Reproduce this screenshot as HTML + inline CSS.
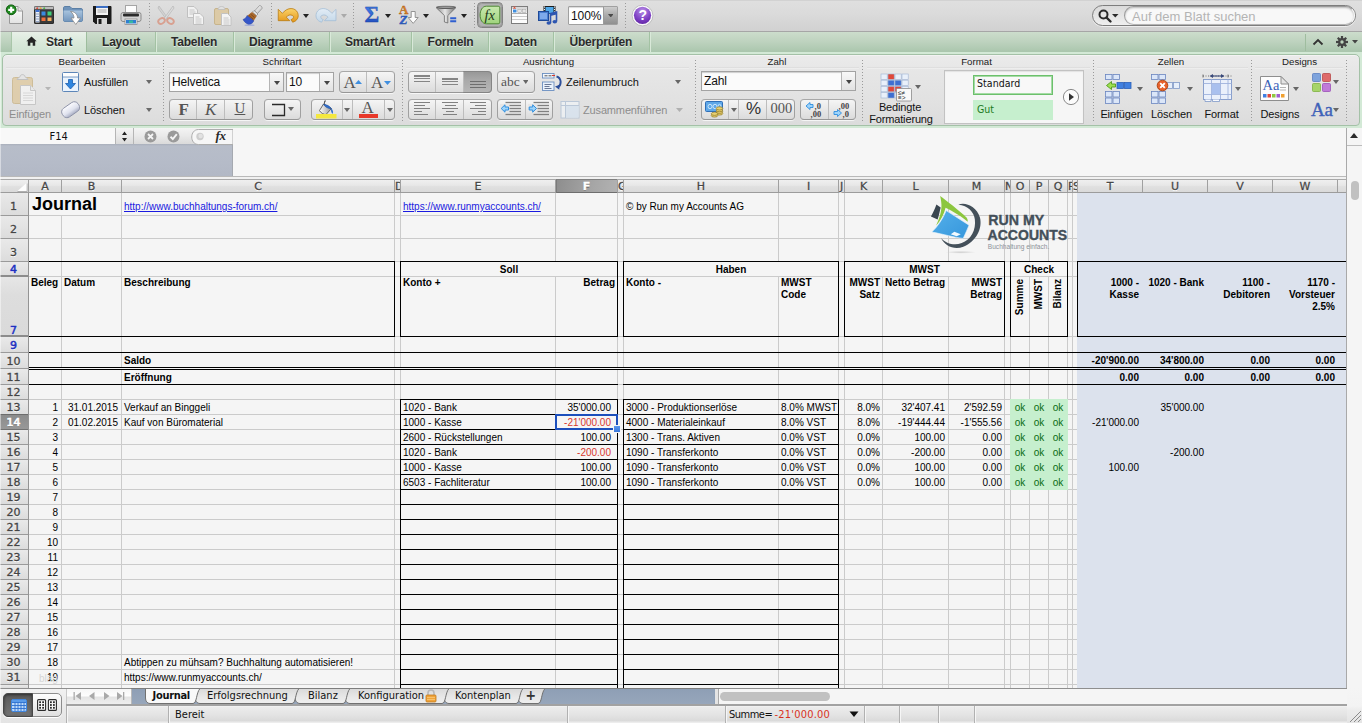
<!DOCTYPE html>
<html lang="de"><head><meta charset="utf-8"><title>Journal</title>
<style>
*{box-sizing:border-box;margin:0;padding:0}
html,body{width:1362px;height:723px;overflow:hidden;background:#e4e4e4}
body{position:relative;font-family:"Liberation Sans",sans-serif;font-size:10px;color:#000}
.abs,.l,.c,.hc,.rh,.u,svg.abs{position:absolute}
.l{display:block;background:#000}
.c{font:10px/12px "Liberation Sans",sans-serif;white-space:nowrap;color:#000}
.b{font-weight:bold}
.w{white-space:normal}
.red{color:#d8382e}
.grn{color:#0a6b12}
.lnk{color:#1a1ae0}
.rot{transform:rotate(-90deg);transform-origin:0 0;width:60px;text-align:right;height:12px}
.colhdr{background:linear-gradient(#efefef,#e7e7e7 45%,#e0e0e0 55%,#dadada);border-top:1px solid #a9a9a9;border-bottom:1px solid #9c9c9c}
.selh{background:linear-gradient(100deg,#8e8e8e,#a6a6a6 60%,#b2b2b2);border-top:1px solid #808080;border-bottom:1px solid #6e6e6e;border-left:1px solid #7a7a7a}
.hc{-webkit-text-stroke:.3px #555;font:11px/13px "DejaVu Sans","Liberation Sans",sans-serif;color:#3a3a3a;text-align:center;height:13px;overflow:hidden;white-space:nowrap;text-shadow:0 1px 0 #fff}
.hc.sel{-webkit-text-stroke:.3px #fff;color:#fff;font-weight:bold;text-shadow:0 1px 0 #555}
.rowhdr{background:linear-gradient(90deg,#e9e9e9,#dcdcdc)}
.selr{background:linear-gradient(#8c8c8c,#989898);border-top:1px solid #6c6c6c;border-bottom:1px solid #727272}
.rh{-webkit-text-stroke:.3px;left:0;width:27px;height:15px;font:11px/15px "DejaVu Sans","Liberation Sans",sans-serif;color:#444;text-align:center;text-shadow:0 1px 0 #fff}
.rh.blue{color:#2030c0;-webkit-text-stroke:.5px #2030c0}
.rh.sel{color:#fff;-webkit-text-stroke:.7px #fff;text-shadow:0 1px 0 #555}
.u{font-family:"DejaVu Sans","Liberation Sans",sans-serif;white-space:nowrap;color:#111}
</style></head>
<body>
<div class="abs" style="left:0;top:177px;width:1362px;height:511px;background:#f5f5f5"></div>
<i class="l" style="left:61px;top:193px;width:1px;height:495px;background:#cbcbcb"></i>
<i class="l" style="left:121px;top:193px;width:1px;height:495px;background:#cbcbcb"></i>
<i class="l" style="left:394px;top:193px;width:1px;height:495px;background:#cbcbcb"></i>
<i class="l" style="left:400px;top:193px;width:1px;height:495px;background:#cbcbcb"></i>
<i class="l" style="left:555px;top:193px;width:1px;height:495px;background:#cbcbcb"></i>
<i class="l" style="left:617px;top:193px;width:1px;height:495px;background:#cbcbcb"></i>
<i class="l" style="left:623px;top:193px;width:1px;height:495px;background:#cbcbcb"></i>
<i class="l" style="left:778px;top:193px;width:1px;height:495px;background:#cbcbcb"></i>
<i class="l" style="left:838px;top:193px;width:1px;height:495px;background:#cbcbcb"></i>
<i class="l" style="left:844px;top:193px;width:1px;height:495px;background:#cbcbcb"></i>
<i class="l" style="left:882px;top:193px;width:1px;height:495px;background:#cbcbcb"></i>
<i class="l" style="left:948px;top:193px;width:1px;height:495px;background:#cbcbcb"></i>
<i class="l" style="left:1004px;top:193px;width:1px;height:495px;background:#cbcbcb"></i>
<i class="l" style="left:1010px;top:193px;width:1px;height:495px;background:#cbcbcb"></i>
<i class="l" style="left:1029px;top:193px;width:1px;height:495px;background:#cbcbcb"></i>
<i class="l" style="left:1048px;top:193px;width:1px;height:495px;background:#cbcbcb"></i>
<i class="l" style="left:1067px;top:193px;width:1px;height:495px;background:#cbcbcb"></i>
<i class="l" style="left:1072px;top:193px;width:1px;height:495px;background:#cbcbcb"></i>
<i class="l" style="left:1077px;top:193px;width:1px;height:495px;background:#cbcbcb"></i>
<i class="l" style="left:1142px;top:193px;width:1px;height:495px;background:#cbcbcb"></i>
<i class="l" style="left:1207px;top:193px;width:1px;height:495px;background:#cbcbcb"></i>
<i class="l" style="left:1272px;top:193px;width:1px;height:495px;background:#cbcbcb"></i>
<i class="l" style="left:1337px;top:193px;width:1px;height:495px;background:#cbcbcb"></i>
<i class="l" style="left:29px;top:215px;width:1318px;height:1px;background:#cbcbcb"></i>
<i class="l" style="left:29px;top:238px;width:1318px;height:1px;background:#cbcbcb"></i>
<i class="l" style="left:29px;top:261px;width:1318px;height:1px;background:#cbcbcb"></i>
<i class="l" style="left:29px;top:276px;width:1318px;height:1px;background:#cbcbcb"></i>
<i class="l" style="left:29px;top:336px;width:1318px;height:1px;background:#cbcbcb"></i>
<i class="l" style="left:29px;top:352px;width:1318px;height:1px;background:#cbcbcb"></i>
<i class="l" style="left:29px;top:368px;width:1318px;height:1px;background:#cbcbcb"></i>
<i class="l" style="left:29px;top:384px;width:1318px;height:1px;background:#cbcbcb"></i>
<i class="l" style="left:29px;top:399px;width:1318px;height:1px;background:#cbcbcb"></i>
<i class="l" style="left:29px;top:414px;width:1318px;height:1px;background:#cbcbcb"></i>
<i class="l" style="left:29px;top:429px;width:1318px;height:1px;background:#cbcbcb"></i>
<i class="l" style="left:29px;top:444px;width:1318px;height:1px;background:#cbcbcb"></i>
<i class="l" style="left:29px;top:459px;width:1318px;height:1px;background:#cbcbcb"></i>
<i class="l" style="left:29px;top:474px;width:1318px;height:1px;background:#cbcbcb"></i>
<i class="l" style="left:29px;top:489px;width:1318px;height:1px;background:#cbcbcb"></i>
<i class="l" style="left:29px;top:504px;width:1318px;height:1px;background:#cbcbcb"></i>
<i class="l" style="left:29px;top:519px;width:1318px;height:1px;background:#cbcbcb"></i>
<i class="l" style="left:29px;top:534px;width:1318px;height:1px;background:#cbcbcb"></i>
<i class="l" style="left:29px;top:549px;width:1318px;height:1px;background:#cbcbcb"></i>
<i class="l" style="left:29px;top:564px;width:1318px;height:1px;background:#cbcbcb"></i>
<i class="l" style="left:29px;top:579px;width:1318px;height:1px;background:#cbcbcb"></i>
<i class="l" style="left:29px;top:594px;width:1318px;height:1px;background:#cbcbcb"></i>
<i class="l" style="left:29px;top:609px;width:1318px;height:1px;background:#cbcbcb"></i>
<i class="l" style="left:29px;top:624px;width:1318px;height:1px;background:#cbcbcb"></i>
<i class="l" style="left:29px;top:639px;width:1318px;height:1px;background:#cbcbcb"></i>
<i class="l" style="left:29px;top:654px;width:1318px;height:1px;background:#cbcbcb"></i>
<i class="l" style="left:29px;top:669px;width:1318px;height:1px;background:#cbcbcb"></i>
<i class="l" style="left:29px;top:684px;width:1318px;height:1px;background:#cbcbcb"></i>
<div class="abs" style="left:555px;top:262px;width:1px;height:14px;background:#f5f5f5"></div>
<div class="abs" style="left:778px;top:262px;width:1px;height:14px;background:#f5f5f5"></div>
<div class="abs" style="left:882px;top:262px;width:1px;height:14px;background:#f5f5f5"></div>
<div class="abs" style="left:948px;top:262px;width:1px;height:14px;background:#f5f5f5"></div>
<div class="abs" style="left:1029px;top:262px;width:1px;height:14px;background:#f5f5f5"></div>
<div class="abs" style="left:1048px;top:262px;width:1px;height:14px;background:#f5f5f5"></div>
<div class="abs" style="left:61px;top:193px;width:1px;height:22px;background:#f5f5f5"></div>
<div class="abs" style="left:1077px;top:193px;width:269px;height:495px;background:#dce2ed"></div>
<div class="abs" style="left:1010px;top:399px;width:58px;height:91px;background:#c6efce"></div>
<div class="abs colhdr" style="left:0;top:179px;width:1347px;height:14px"></div>
<i class="l" style="left:28px;top:180px;width:1px;height:12px;background:#a0a0a0"></i>
<i class="l" style="left:61px;top:180px;width:1px;height:12px;background:#a0a0a0"></i>
<i class="l" style="left:121px;top:180px;width:1px;height:12px;background:#a0a0a0"></i>
<i class="l" style="left:394px;top:180px;width:1px;height:12px;background:#a0a0a0"></i>
<i class="l" style="left:400px;top:180px;width:1px;height:12px;background:#a0a0a0"></i>
<i class="l" style="left:555px;top:180px;width:1px;height:12px;background:#a0a0a0"></i>
<i class="l" style="left:617px;top:180px;width:1px;height:12px;background:#a0a0a0"></i>
<i class="l" style="left:623px;top:180px;width:1px;height:12px;background:#a0a0a0"></i>
<i class="l" style="left:778px;top:180px;width:1px;height:12px;background:#a0a0a0"></i>
<i class="l" style="left:838px;top:180px;width:1px;height:12px;background:#a0a0a0"></i>
<i class="l" style="left:844px;top:180px;width:1px;height:12px;background:#a0a0a0"></i>
<i class="l" style="left:882px;top:180px;width:1px;height:12px;background:#a0a0a0"></i>
<i class="l" style="left:948px;top:180px;width:1px;height:12px;background:#a0a0a0"></i>
<i class="l" style="left:1004px;top:180px;width:1px;height:12px;background:#a0a0a0"></i>
<i class="l" style="left:1010px;top:180px;width:1px;height:12px;background:#a0a0a0"></i>
<i class="l" style="left:1029px;top:180px;width:1px;height:12px;background:#a0a0a0"></i>
<i class="l" style="left:1048px;top:180px;width:1px;height:12px;background:#a0a0a0"></i>
<i class="l" style="left:1067px;top:180px;width:1px;height:12px;background:#a0a0a0"></i>
<i class="l" style="left:1072px;top:180px;width:1px;height:12px;background:#a0a0a0"></i>
<i class="l" style="left:1077px;top:180px;width:1px;height:12px;background:#a0a0a0"></i>
<i class="l" style="left:1142px;top:180px;width:1px;height:12px;background:#a0a0a0"></i>
<i class="l" style="left:1207px;top:180px;width:1px;height:12px;background:#a0a0a0"></i>
<i class="l" style="left:1272px;top:180px;width:1px;height:12px;background:#a0a0a0"></i>
<i class="l" style="left:1337px;top:180px;width:1px;height:12px;background:#a0a0a0"></i>
<div class="abs selh" style="left:556px;top:179px;width:61px;height:14px;"></div>
<div class="hc" style="left:29px;top:180px;width:32px">A</div>
<div class="hc" style="left:62px;top:180px;width:59px">B</div>
<div class="hc" style="left:122px;top:180px;width:272px">C</div>
<div class="hc" style="left:395px;top:180px;width:5px">D</div>
<div class="hc" style="left:401px;top:180px;width:154px">E</div>
<div class="hc sel" style="left:556px;top:180px;width:61px">F</div>
<div class="hc" style="left:618px;top:180px;width:5px">G</div>
<div class="hc" style="left:624px;top:180px;width:154px">H</div>
<div class="hc" style="left:779px;top:180px;width:59px">I</div>
<div class="hc" style="left:839px;top:180px;width:5px">J</div>
<div class="hc" style="left:845px;top:180px;width:37px">K</div>
<div class="hc" style="left:883px;top:180px;width:65px">L</div>
<div class="hc" style="left:949px;top:180px;width:55px">M</div>
<div class="hc" style="left:1005px;top:180px;width:5px">N</div>
<div class="hc" style="left:1011px;top:180px;width:18px">O</div>
<div class="hc" style="left:1030px;top:180px;width:18px">P</div>
<div class="hc" style="left:1049px;top:180px;width:18px">Q</div>
<div class="hc" style="left:1068px;top:180px;width:4px">R</div>
<div class="hc" style="left:1073px;top:180px;width:4px">S</div>
<div class="hc" style="left:1078px;top:180px;width:64px">T</div>
<div class="hc" style="left:1143px;top:180px;width:64px">U</div>
<div class="hc" style="left:1208px;top:180px;width:64px">V</div>
<div class="hc" style="left:1273px;top:180px;width:64px">W</div>
<div class="hc" style="left:1338px;top:180px;width:9px"></div>
<svg class="abs" style="left:16px;top:182px" width="12" height="10"><path d="M11 1.500V9.500H1.500" fill="none" stroke="#b0b0b0" stroke-width="1"/><path d="M10.500 1L10.500 9L1.500 9Z" fill="#fdfdfd"/></svg>
<div class="abs rowhdr" style="left:0;top:193px;width:28px;height:495px"></div>
<i class="l" style="left:28px;top:193px;width:1px;height:495px;background:#939393"></i>
<div class="abs" style="left:0px;top:193px;width:28px;height:22px;background:linear-gradient(#e9e9e9,#e3e3e3 50%,#dcdcdc)"></div>
<i class="l" style="left:0px;top:215px;width:28px;height:1px;background:#9a9a9a"></i>
<div class="rh" style="top:199px">1</div>
<div class="abs" style="left:0px;top:216px;width:28px;height:22px;background:linear-gradient(#e9e9e9,#e3e3e3 50%,#dcdcdc)"></div>
<i class="l" style="left:0px;top:238px;width:28px;height:1px;background:#9a9a9a"></i>
<div class="rh" style="top:222px">2</div>
<div class="abs" style="left:0px;top:239px;width:28px;height:22px;background:linear-gradient(#e9e9e9,#e3e3e3 50%,#dcdcdc)"></div>
<i class="l" style="left:0px;top:261px;width:28px;height:1px;background:#9a9a9a"></i>
<div class="rh" style="top:245px">3</div>
<div class="abs" style="left:0px;top:262px;width:28px;height:14px;background:linear-gradient(#e9e9e9,#e3e3e3 50%,#dcdcdc)"></div>
<i class="l" style="left:0px;top:275px;width:28px;height:2px;background:#8c8c8c"></i>
<div class="rh blue" style="top:262px">4</div>
<div class="abs" style="left:0px;top:277px;width:28px;height:59px;background:linear-gradient(#e6e6e6,#dddddd 30%,#dadada)"></div>
<i class="l" style="left:0px;top:335px;width:28px;height:2px;background:#8c8c8c"></i>
<div class="rh blue" style="top:322.5px">7</div>
<div class="abs" style="left:0px;top:337px;width:28px;height:15px;background:linear-gradient(#e9e9e9,#e3e3e3 50%,#dcdcdc)"></div>
<i class="l" style="left:0px;top:352px;width:28px;height:1px;background:#9a9a9a"></i>
<div class="rh blue" style="top:338px">9</div>
<div class="abs" style="left:0px;top:353px;width:28px;height:15px;background:linear-gradient(#e9e9e9,#e3e3e3 50%,#dcdcdc)"></div>
<i class="l" style="left:0px;top:368px;width:28px;height:1px;background:#9a9a9a"></i>
<div class="rh" style="top:354px">10</div>
<div class="abs" style="left:0px;top:369px;width:28px;height:15px;background:linear-gradient(#e9e9e9,#e3e3e3 50%,#dcdcdc)"></div>
<i class="l" style="left:0px;top:384px;width:28px;height:1px;background:#9a9a9a"></i>
<div class="rh" style="top:370px">11</div>
<div class="abs" style="left:0px;top:385px;width:28px;height:14px;background:linear-gradient(#e9e9e9,#e3e3e3 50%,#dcdcdc)"></div>
<i class="l" style="left:0px;top:399px;width:28px;height:1px;background:#9a9a9a"></i>
<div class="rh" style="top:385px">12</div>
<div class="abs" style="left:0px;top:400px;width:28px;height:14px;background:linear-gradient(#e9e9e9,#e3e3e3 50%,#dcdcdc)"></div>
<i class="l" style="left:0px;top:414px;width:28px;height:1px;background:#9a9a9a"></i>
<div class="rh" style="top:400px">13</div>
<div class="abs selr" style="left:0px;top:414px;width:28px;height:16px;"></div>
<i class="l" style="left:0px;top:429px;width:28px;height:1px;background:#727272"></i>
<div class="rh sel" style="top:415px">14</div>
<div class="abs" style="left:0px;top:430px;width:28px;height:14px;background:linear-gradient(#e9e9e9,#e3e3e3 50%,#dcdcdc)"></div>
<i class="l" style="left:0px;top:444px;width:28px;height:1px;background:#9a9a9a"></i>
<div class="rh" style="top:430px">15</div>
<div class="abs" style="left:0px;top:445px;width:28px;height:14px;background:linear-gradient(#e9e9e9,#e3e3e3 50%,#dcdcdc)"></div>
<i class="l" style="left:0px;top:459px;width:28px;height:1px;background:#9a9a9a"></i>
<div class="rh" style="top:445px">16</div>
<div class="abs" style="left:0px;top:460px;width:28px;height:14px;background:linear-gradient(#e9e9e9,#e3e3e3 50%,#dcdcdc)"></div>
<i class="l" style="left:0px;top:474px;width:28px;height:1px;background:#9a9a9a"></i>
<div class="rh" style="top:460px">17</div>
<div class="abs" style="left:0px;top:475px;width:28px;height:14px;background:linear-gradient(#e9e9e9,#e3e3e3 50%,#dcdcdc)"></div>
<i class="l" style="left:0px;top:489px;width:28px;height:1px;background:#9a9a9a"></i>
<div class="rh" style="top:475px">18</div>
<div class="abs" style="left:0px;top:490px;width:28px;height:14px;background:linear-gradient(#e9e9e9,#e3e3e3 50%,#dcdcdc)"></div>
<i class="l" style="left:0px;top:504px;width:28px;height:1px;background:#9a9a9a"></i>
<div class="rh" style="top:490px">19</div>
<div class="abs" style="left:0px;top:505px;width:28px;height:14px;background:linear-gradient(#e9e9e9,#e3e3e3 50%,#dcdcdc)"></div>
<i class="l" style="left:0px;top:519px;width:28px;height:1px;background:#9a9a9a"></i>
<div class="rh" style="top:505px">20</div>
<div class="abs" style="left:0px;top:520px;width:28px;height:14px;background:linear-gradient(#e9e9e9,#e3e3e3 50%,#dcdcdc)"></div>
<i class="l" style="left:0px;top:534px;width:28px;height:1px;background:#9a9a9a"></i>
<div class="rh" style="top:520px">21</div>
<div class="abs" style="left:0px;top:535px;width:28px;height:14px;background:linear-gradient(#e9e9e9,#e3e3e3 50%,#dcdcdc)"></div>
<i class="l" style="left:0px;top:549px;width:28px;height:1px;background:#9a9a9a"></i>
<div class="rh" style="top:535px">22</div>
<div class="abs" style="left:0px;top:550px;width:28px;height:14px;background:linear-gradient(#e9e9e9,#e3e3e3 50%,#dcdcdc)"></div>
<i class="l" style="left:0px;top:564px;width:28px;height:1px;background:#9a9a9a"></i>
<div class="rh" style="top:550px">23</div>
<div class="abs" style="left:0px;top:565px;width:28px;height:14px;background:linear-gradient(#e9e9e9,#e3e3e3 50%,#dcdcdc)"></div>
<i class="l" style="left:0px;top:579px;width:28px;height:1px;background:#9a9a9a"></i>
<div class="rh" style="top:565px">24</div>
<div class="abs" style="left:0px;top:580px;width:28px;height:14px;background:linear-gradient(#e9e9e9,#e3e3e3 50%,#dcdcdc)"></div>
<i class="l" style="left:0px;top:594px;width:28px;height:1px;background:#9a9a9a"></i>
<div class="rh" style="top:580px">25</div>
<div class="abs" style="left:0px;top:595px;width:28px;height:14px;background:linear-gradient(#e9e9e9,#e3e3e3 50%,#dcdcdc)"></div>
<i class="l" style="left:0px;top:609px;width:28px;height:1px;background:#9a9a9a"></i>
<div class="rh" style="top:595px">26</div>
<div class="abs" style="left:0px;top:610px;width:28px;height:14px;background:linear-gradient(#e9e9e9,#e3e3e3 50%,#dcdcdc)"></div>
<i class="l" style="left:0px;top:624px;width:28px;height:1px;background:#9a9a9a"></i>
<div class="rh" style="top:610px">27</div>
<div class="abs" style="left:0px;top:625px;width:28px;height:14px;background:linear-gradient(#e9e9e9,#e3e3e3 50%,#dcdcdc)"></div>
<i class="l" style="left:0px;top:639px;width:28px;height:1px;background:#9a9a9a"></i>
<div class="rh" style="top:625px">28</div>
<div class="abs" style="left:0px;top:640px;width:28px;height:14px;background:linear-gradient(#e9e9e9,#e3e3e3 50%,#dcdcdc)"></div>
<i class="l" style="left:0px;top:654px;width:28px;height:1px;background:#9a9a9a"></i>
<div class="rh" style="top:640px">29</div>
<div class="abs" style="left:0px;top:655px;width:28px;height:14px;background:linear-gradient(#e9e9e9,#e3e3e3 50%,#dcdcdc)"></div>
<i class="l" style="left:0px;top:669px;width:28px;height:1px;background:#9a9a9a"></i>
<div class="rh" style="top:655px">30</div>
<div class="abs" style="left:0px;top:670px;width:28px;height:14px;background:linear-gradient(#e9e9e9,#e3e3e3 50%,#dcdcdc)"></div>
<i class="l" style="left:0px;top:684px;width:28px;height:1px;background:#9a9a9a"></i>
<div class="rh" style="top:670px">31</div>
<div class="abs" style="left:0px;top:685px;width:28px;height:3px;background:linear-gradient(#e9e9e9,#e3e3e3 50%,#dcdcdc)"></div>
<i class="l" style="left:29px;top:261px;width:366px;height:1px"></i>
<i class="l" style="left:29px;top:336px;width:366px;height:1px"></i>
<i class="l" style="left:394px;top:261px;width:1px;height:76px"></i>
<i class="l" style="left:400px;top:261px;width:218px;height:1px"></i>
<i class="l" style="left:400px;top:336px;width:218px;height:1px"></i>
<i class="l" style="left:400px;top:261px;width:1px;height:76px"></i>
<i class="l" style="left:617px;top:261px;width:1px;height:76px"></i>
<i class="l" style="left:623px;top:261px;width:216px;height:1px"></i>
<i class="l" style="left:623px;top:336px;width:216px;height:1px"></i>
<i class="l" style="left:623px;top:261px;width:1px;height:76px"></i>
<i class="l" style="left:838px;top:261px;width:1px;height:76px"></i>
<i class="l" style="left:844px;top:261px;width:161px;height:1px"></i>
<i class="l" style="left:844px;top:336px;width:161px;height:1px"></i>
<i class="l" style="left:844px;top:261px;width:1px;height:76px"></i>
<i class="l" style="left:1004px;top:261px;width:1px;height:76px"></i>
<i class="l" style="left:1010px;top:261px;width:58px;height:1px"></i>
<i class="l" style="left:1010px;top:336px;width:58px;height:1px"></i>
<i class="l" style="left:1010px;top:261px;width:1px;height:76px"></i>
<i class="l" style="left:1067px;top:261px;width:1px;height:76px"></i>
<i class="l" style="left:1077px;top:261px;width:270px;height:1px"></i>
<i class="l" style="left:1077px;top:336px;width:270px;height:1px"></i>
<i class="l" style="left:1077px;top:261px;width:1px;height:76px"></i>
<i class="l" style="left:29px;top:352px;width:1318px;height:1px"></i>
<i class="l" style="left:29px;top:367px;width:1318px;height:1px"></i>
<i class="l" style="left:29px;top:369px;width:1318px;height:1px"></i>
<div class="abs" style="left:29px;top:368px;width:1318px;height:1px;background:#f5f5f5"></div>
<div class="abs" style="left:1077px;top:368px;width:269px;height:1px;background:#dce2ed"></div>
<i class="l" style="left:29px;top:384px;width:589px;height:1px"></i>
<i class="l" style="left:623px;top:384px;width:724px;height:1px"></i>
<i class="l" style="left:400px;top:399px;width:1px;height:289px"></i>
<i class="l" style="left:617px;top:399px;width:1px;height:289px"></i>
<i class="l" style="left:400px;top:399px;width:218px;height:1px"></i>
<i class="l" style="left:400px;top:414px;width:218px;height:1px"></i>
<i class="l" style="left:400px;top:429px;width:218px;height:1px"></i>
<i class="l" style="left:400px;top:444px;width:218px;height:1px"></i>
<i class="l" style="left:400px;top:459px;width:218px;height:1px"></i>
<i class="l" style="left:400px;top:474px;width:218px;height:1px"></i>
<i class="l" style="left:400px;top:489px;width:218px;height:1px"></i>
<i class="l" style="left:400px;top:504px;width:218px;height:1px"></i>
<i class="l" style="left:400px;top:519px;width:218px;height:1px"></i>
<i class="l" style="left:400px;top:534px;width:218px;height:1px"></i>
<i class="l" style="left:400px;top:549px;width:218px;height:1px"></i>
<i class="l" style="left:400px;top:564px;width:218px;height:1px"></i>
<i class="l" style="left:400px;top:579px;width:218px;height:1px"></i>
<i class="l" style="left:400px;top:594px;width:218px;height:1px"></i>
<i class="l" style="left:400px;top:609px;width:218px;height:1px"></i>
<i class="l" style="left:400px;top:624px;width:218px;height:1px"></i>
<i class="l" style="left:400px;top:639px;width:218px;height:1px"></i>
<i class="l" style="left:400px;top:654px;width:218px;height:1px"></i>
<i class="l" style="left:400px;top:669px;width:218px;height:1px"></i>
<i class="l" style="left:400px;top:684px;width:218px;height:1px"></i>
<i class="l" style="left:623px;top:399px;width:1px;height:289px"></i>
<i class="l" style="left:838px;top:399px;width:1px;height:289px"></i>
<i class="l" style="left:623px;top:399px;width:216px;height:1px"></i>
<i class="l" style="left:623px;top:414px;width:216px;height:1px"></i>
<i class="l" style="left:623px;top:429px;width:216px;height:1px"></i>
<i class="l" style="left:623px;top:444px;width:216px;height:1px"></i>
<i class="l" style="left:623px;top:459px;width:216px;height:1px"></i>
<i class="l" style="left:623px;top:474px;width:216px;height:1px"></i>
<i class="l" style="left:623px;top:489px;width:216px;height:1px"></i>
<i class="l" style="left:623px;top:504px;width:216px;height:1px"></i>
<i class="l" style="left:623px;top:519px;width:216px;height:1px"></i>
<i class="l" style="left:623px;top:534px;width:216px;height:1px"></i>
<i class="l" style="left:623px;top:549px;width:216px;height:1px"></i>
<i class="l" style="left:623px;top:564px;width:216px;height:1px"></i>
<i class="l" style="left:623px;top:579px;width:216px;height:1px"></i>
<i class="l" style="left:623px;top:594px;width:216px;height:1px"></i>
<i class="l" style="left:623px;top:609px;width:216px;height:1px"></i>
<i class="l" style="left:623px;top:624px;width:216px;height:1px"></i>
<i class="l" style="left:623px;top:639px;width:216px;height:1px"></i>
<i class="l" style="left:623px;top:654px;width:216px;height:1px"></i>
<i class="l" style="left:623px;top:669px;width:216px;height:1px"></i>
<i class="l" style="left:623px;top:684px;width:216px;height:1px"></i>
<div class="c b" style="left:31px;top:194px;font-size:18px;line-height:20px;padding-left:1px">Journal</div>
<div class="c lnk" style="left:124px;top:201px;"><u>http://www.buchhaltungs-forum.ch/</u></div>
<div class="c lnk" style="left:403px;top:201px;"><u>https://www.runmyaccounts.ch/</u></div>
<div class="c" style="left:626px;top:201px;">© by Run my Accounts AG</div>
<div class="c b" style="left:401px;top:264px;width:216px;text-align:center;">Soll</div>
<div class="c b" style="left:624px;top:264px;width:214px;text-align:center;">Haben</div>
<div class="c b" style="left:845px;top:264px;width:159px;text-align:center;">MWST</div>
<div class="c b" style="left:1011px;top:264px;width:56px;text-align:center;">Check</div>
<div class="c b w" style="left:31px;top:277px;">Beleg</div>
<div class="c b w" style="left:64px;top:277px;">Datum</div>
<div class="c b w" style="left:124px;top:277px;">Beschreibung</div>
<div class="c b w" style="left:403px;top:277px;">Konto +</div>
<div class="c b w" style="left:556px;top:277px;width:59px;text-align:right;">Betrag</div>
<div class="c b w" style="left:626px;top:277px;">Konto -</div>
<div class="c b w" style="left:781px;top:277px;">MWST<br>Code</div>
<div class="c b w" style="left:845px;top:277px;width:35px;text-align:right;">MWST<br>Satz</div>
<div class="c b w" style="left:885px;top:277px;">Netto Betrag</div>
<div class="c b w" style="left:949px;top:277px;width:53px;text-align:right;">MWST<br>Betrag</div>
<div class="c b w" style="left:1078px;top:277px;width:61px;text-align:right;">1000 -<br>Kasse</div>
<div class="c b w" style="left:1143px;top:277px;width:61px;text-align:right;">1020 - Bank</div>
<div class="c b w" style="left:1208px;top:277px;width:62px;text-align:right;">1100 -<br>Debitoren</div>
<div class="c b w" style="left:1273px;top:277px;width:62px;text-align:right;">1170 -<br>Vorsteuer<br>2.5%</div>
<div class="c b rot" style="left:1013.5px;top:339px">Summe</div>
<div class="c b rot" style="left:1032.5px;top:339px">MWST</div>
<div class="c b rot" style="left:1051.5px;top:339px">Bilanz</div>
<div class="c b" style="left:124px;top:355px;">Saldo</div>
<div class="c b" style="left:124px;top:372px;">Eröffnung</div>
<div class="c b" style="left:1078px;top:355px;width:62px;text-align:right;padding-right:1px">-20'900.00</div>
<div class="c b" style="left:1078px;top:372px;width:62px;text-align:right;padding-right:1px">0.00</div>
<div class="c b" style="left:1143px;top:355px;width:62px;text-align:right;padding-right:1px">34'800.00</div>
<div class="c b" style="left:1143px;top:372px;width:62px;text-align:right;padding-right:1px">0.00</div>
<div class="c b" style="left:1208px;top:355px;width:62px;text-align:right;">0.00</div>
<div class="c b" style="left:1208px;top:372px;width:62px;text-align:right;">0.00</div>
<div class="c b" style="left:1273px;top:355px;width:62px;text-align:right;">0.00</div>
<div class="c b" style="left:1273px;top:372px;width:62px;text-align:right;">0.00</div>
<div class="c" style="left:29px;top:402px;width:30px;text-align:right;padding-right:1px">1</div>
<div class="c" style="left:62px;top:402px;width:57px;text-align:right;padding-right:1px">31.01.2015</div>
<div class="c" style="left:124px;top:402px;">Verkauf an Binggeli</div>
<div class="c" style="left:403px;top:402px;">1020 - Bank</div>
<div class="c" style="left:556px;top:402px;width:59px;text-align:right;padding-right:4px">35'000.00</div>
<div class="c" style="left:626px;top:402px;">3000 - Produktionserlöse</div>
<div class="c" style="left:781px;top:402px;">8.0% MWST</div>
<div class="c" style="left:845px;top:402px;width:35px;text-align:right;">8.0%</div>
<div class="c" style="left:883px;top:402px;width:63px;text-align:right;padding-right:1px">32'407.41</div>
<div class="c" style="left:949px;top:402px;width:53px;text-align:right;">2'592.59</div>
<div class="c grn" style="left:1011px;top:402px;width:18px;text-align:center;">ok</div>
<div class="c grn" style="left:1030px;top:402px;width:18px;text-align:center;">ok</div>
<div class="c grn" style="left:1049px;top:402px;width:18px;text-align:center;">ok</div>
<div class="c" style="left:1143px;top:402px;width:62px;text-align:right;padding-right:1px">35'000.00</div>
<div class="c" style="left:29px;top:417px;width:30px;text-align:right;padding-right:1px">2</div>
<div class="c" style="left:62px;top:417px;width:57px;text-align:right;padding-right:1px">01.02.2015</div>
<div class="c" style="left:124px;top:417px;">Kauf von Büromaterial</div>
<div class="c" style="left:403px;top:417px;">1000 - Kasse</div>
<div class="c red" style="left:556px;top:417px;width:59px;text-align:right;padding-right:4px">-21'000.00</div>
<div class="c" style="left:626px;top:417px;">4000 - Materialeinkauf</div>
<div class="c" style="left:781px;top:417px;">8.0% VST</div>
<div class="c" style="left:845px;top:417px;width:35px;text-align:right;">8.0%</div>
<div class="c" style="left:883px;top:417px;width:63px;text-align:right;padding-right:1px">-19'444.44</div>
<div class="c" style="left:949px;top:417px;width:53px;text-align:right;">-1'555.56</div>
<div class="c grn" style="left:1011px;top:417px;width:18px;text-align:center;">ok</div>
<div class="c grn" style="left:1030px;top:417px;width:18px;text-align:center;">ok</div>
<div class="c grn" style="left:1049px;top:417px;width:18px;text-align:center;">ok</div>
<div class="c" style="left:1078px;top:417px;width:62px;text-align:right;padding-right:1px">-21'000.00</div>
<div class="c" style="left:29px;top:432px;width:30px;text-align:right;padding-right:1px">3</div>
<div class="c" style="left:403px;top:432px;">2600 - Rückstellungen</div>
<div class="c" style="left:556px;top:432px;width:59px;text-align:right;padding-right:4px">100.00</div>
<div class="c" style="left:626px;top:432px;">1300 - Trans. Aktiven</div>
<div class="c" style="left:781px;top:432px;">0.0% VST</div>
<div class="c" style="left:845px;top:432px;width:35px;text-align:right;">0.0%</div>
<div class="c" style="left:883px;top:432px;width:63px;text-align:right;padding-right:1px">100.00</div>
<div class="c" style="left:949px;top:432px;width:53px;text-align:right;">0.00</div>
<div class="c grn" style="left:1011px;top:432px;width:18px;text-align:center;">ok</div>
<div class="c grn" style="left:1030px;top:432px;width:18px;text-align:center;">ok</div>
<div class="c grn" style="left:1049px;top:432px;width:18px;text-align:center;">ok</div>
<div class="c" style="left:29px;top:447px;width:30px;text-align:right;padding-right:1px">4</div>
<div class="c" style="left:403px;top:447px;">1020 - Bank</div>
<div class="c red" style="left:556px;top:447px;width:59px;text-align:right;padding-right:4px">-200.00</div>
<div class="c" style="left:626px;top:447px;">1090 - Transferkonto</div>
<div class="c" style="left:781px;top:447px;">0.0% VST</div>
<div class="c" style="left:845px;top:447px;width:35px;text-align:right;">0.0%</div>
<div class="c" style="left:883px;top:447px;width:63px;text-align:right;padding-right:1px">-200.00</div>
<div class="c" style="left:949px;top:447px;width:53px;text-align:right;">0.00</div>
<div class="c grn" style="left:1011px;top:447px;width:18px;text-align:center;">ok</div>
<div class="c grn" style="left:1030px;top:447px;width:18px;text-align:center;">ok</div>
<div class="c grn" style="left:1049px;top:447px;width:18px;text-align:center;">ok</div>
<div class="c" style="left:1143px;top:447px;width:62px;text-align:right;padding-right:1px">-200.00</div>
<div class="c" style="left:29px;top:462px;width:30px;text-align:right;padding-right:1px">5</div>
<div class="c" style="left:403px;top:462px;">1000 - Kasse</div>
<div class="c" style="left:556px;top:462px;width:59px;text-align:right;padding-right:4px">100.00</div>
<div class="c" style="left:626px;top:462px;">1090 - Transferkonto</div>
<div class="c" style="left:781px;top:462px;">0.0% VST</div>
<div class="c" style="left:845px;top:462px;width:35px;text-align:right;">0.0%</div>
<div class="c" style="left:883px;top:462px;width:63px;text-align:right;padding-right:1px">100.00</div>
<div class="c" style="left:949px;top:462px;width:53px;text-align:right;">0.00</div>
<div class="c grn" style="left:1011px;top:462px;width:18px;text-align:center;">ok</div>
<div class="c grn" style="left:1030px;top:462px;width:18px;text-align:center;">ok</div>
<div class="c grn" style="left:1049px;top:462px;width:18px;text-align:center;">ok</div>
<div class="c" style="left:1078px;top:462px;width:62px;text-align:right;padding-right:1px">100.00</div>
<div class="c" style="left:29px;top:477px;width:30px;text-align:right;padding-right:1px">6</div>
<div class="c" style="left:403px;top:477px;">6503 - Fachliteratur</div>
<div class="c" style="left:556px;top:477px;width:59px;text-align:right;padding-right:4px">100.00</div>
<div class="c" style="left:626px;top:477px;">1090 - Transferkonto</div>
<div class="c" style="left:781px;top:477px;">0.0% VST</div>
<div class="c" style="left:845px;top:477px;width:35px;text-align:right;">0.0%</div>
<div class="c" style="left:883px;top:477px;width:63px;text-align:right;padding-right:1px">100.00</div>
<div class="c" style="left:949px;top:477px;width:53px;text-align:right;">0.00</div>
<div class="c grn" style="left:1011px;top:477px;width:18px;text-align:center;">ok</div>
<div class="c grn" style="left:1030px;top:477px;width:18px;text-align:center;">ok</div>
<div class="c grn" style="left:1049px;top:477px;width:18px;text-align:center;">ok</div>
<div class="c" style="left:29px;top:492px;width:30px;text-align:right;padding-right:1px">7</div>
<div class="c" style="left:29px;top:507px;width:30px;text-align:right;padding-right:1px">8</div>
<div class="c" style="left:29px;top:522px;width:30px;text-align:right;padding-right:1px">9</div>
<div class="c" style="left:29px;top:537px;width:30px;text-align:right;padding-right:1px">10</div>
<div class="c" style="left:29px;top:552px;width:30px;text-align:right;padding-right:1px">11</div>
<div class="c" style="left:29px;top:567px;width:30px;text-align:right;padding-right:1px">12</div>
<div class="c" style="left:29px;top:582px;width:30px;text-align:right;padding-right:1px">13</div>
<div class="c" style="left:29px;top:597px;width:30px;text-align:right;padding-right:1px">14</div>
<div class="c" style="left:29px;top:612px;width:30px;text-align:right;padding-right:1px">15</div>
<div class="c" style="left:29px;top:627px;width:30px;text-align:right;padding-right:1px">16</div>
<div class="c" style="left:29px;top:642px;width:30px;text-align:right;padding-right:1px">17</div>
<div class="c" style="left:29px;top:657px;width:30px;text-align:right;padding-right:1px">18</div>
<div class="c" style="left:29px;top:672px;width:30px;text-align:right;padding-right:1px">19</div>
<div class="c" style="left:124px;top:657px;">Abtippen zu mühsam? Buchhaltung automatisieren!</div>
<div class="c" style="left:124px;top:672px;">https://www.runmyaccounts.ch/</div>
<div class="c" style="left:39px;top:673px;color:#d6d6d6">blag</div>
<div class="abs" style="left:555px;top:414px;width:63px;height:16px;border:2px solid #1c4fbc;background:transparent"></div>
<div class="abs" style="left:613px;top:425px;width:8px;height:8px;background:linear-gradient(#5a96ee,#3a78dc);border:1px solid #f5f5f5"></div>
<svg class="abs" style="left:925px;top:190px" width="70" height="66" viewBox="0 0 767 723">
<defs><linearGradient id="lgb" x1="0" y1="0" x2="1" y2="1"><stop offset="0" stop-color="#55b0ea"/><stop offset="1" stop-color="#3596dc"/></linearGradient>
<radialGradient id="lgs"><stop offset="0" stop-color="#cfcfcf"/><stop offset="1" stop-color="#cfcfcf" stop-opacity="0"/></radialGradient></defs>
<ellipse cx="390" cy="682" rx="170" ry="16" fill="url(#lgs)"/>
<path d="M365 162C440 128 565 180 602 300C632 420 562 562 420 622C320 662 215 612 176 526C232 590 322 612 402 582C502 542 562 440 546 320C536 240 470 172 365 162Z" fill="#44505a"/>
<path d="M125 160L172 192C160 240 150 290 138 322L65 290C90 250 110 205 125 160Z" fill="#3a4650"/>
<path d="M165 65C230 110 380 230 455 300C465 315 470 330 468 348C400 290 300 230 225 195C210 260 170 340 122 390C150 330 185 240 180 160C178 120 172 90 165 65Z" fill="#8cc63e"/>
<path d="M232 225C310 275 400 335 482 385C465 430 440 485 418 530C330 522 200 484 75 460C140 400 200 310 232 225Z" fill="url(#lgb)" stroke="#e4f3fc" stroke-width="7" stroke-linejoin="round"/>
<path d="M322 458L392 484L347 508L282 486Z" fill="#f2f9fe"/>
</svg>
<svg class="abs" style="left:985px;top:210px" width="86" height="44" viewBox="0 0 86 44">
<text x="3.2" y="15.3" font-family="'Liberation Sans',sans-serif" font-weight="bold" font-size="14.8" fill="#434f59" stroke="#434f59" stroke-width=".35" textLength="56" lengthAdjust="spacingAndGlyphs">RUN MY</text>
<text x="2.6" y="29.9" font-family="'Liberation Sans',sans-serif" font-weight="bold" font-size="15" fill="#434f59" stroke="#434f59" stroke-width=".35" textLength="79.500" lengthAdjust="spacingAndGlyphs">ACCOUNTS</text>
<text x="2.8" y="39.2" font-family="'Liberation Sans',sans-serif" font-size="7.6" fill="#8d9399" textLength="61.500" lengthAdjust="spacingAndGlyphs">Buchhaltung einfach.</text>
</svg>
<div class="abs" style="left:0px;top:0px;width:1362px;height:32px;background:linear-gradient(#dfdfdf,#dbdbdb 40%,#d1d1d1);border-top:1px solid #d2d2d2;border-bottom:1px solid #a6a6a6"></div>
<div class="abs" style="left:149px;top:3px;width:1px;height:26px;background:repeating-linear-gradient(#9a9a9a 0 1px,transparent 1px 3px)"></div>
<div class="abs" style="left:271px;top:3px;width:1px;height:26px;background:repeating-linear-gradient(#9a9a9a 0 1px,transparent 1px 3px)"></div>
<div class="abs" style="left:353px;top:3px;width:1px;height:26px;background:repeating-linear-gradient(#9a9a9a 0 1px,transparent 1px 3px)"></div>
<div class="abs" style="left:474px;top:3px;width:1px;height:26px;background:repeating-linear-gradient(#9a9a9a 0 1px,transparent 1px 3px)"></div>
<div class="abs" style="left:625px;top:3px;width:1px;height:26px;background:repeating-linear-gradient(#9a9a9a 0 1px,transparent 1px 3px)"></div>
<svg class="abs" style="left:4px;top:3px" width="22" height="24" viewBox="0 0 22 24"><defs><linearGradient id="ng" x1="0" y1="0" x2="0" y2="1"><stop offset="0" stop-color="#ffffff"/><stop offset="1" stop-color="#e2e2e2"/></linearGradient></defs><path d="M5.500 3.500H14L18.500 8V20.500H5.500Z" fill="url(#ng)" stroke="#9a9a9a"/><path d="M14 3.500V8H18.500" fill="#e6e6e6" stroke="#9a9a9a"/><circle cx="7.200" cy="6.800" r="4.900" fill="#1f8a1f" stroke="#0f5a0f"/><path d="M7.200 3.800V9.800M4.200 6.800H10.200" stroke="#fff" stroke-width="2.200"/></svg>
<svg class="abs" style="left:33px;top:5px" width="22" height="20" viewBox="0 0 22 20"><rect x="1" y="1" width="20" height="18" rx="1.500" fill="#2b2b2b"/><rect x="1.500" y="1.500" width="19" height="3" fill="#bdbdbd"/><rect x="2" y="4.500" width="18" height="13.500" fill="#3a3a3a"/><rect x="2.500" y="5" width="4" height="12.500" fill="#e9eef8"/><rect x="2.500" y="5" width="4" height="2" fill="#3b6fd0"/><path d="M3 9h3M3 11.500h3M3 14h3M3 16.500h3" stroke="#7a8fb8" stroke-width=".8"/><rect x="8.500" y="6.500" width="4" height="4" fill="#3b8be0"/><rect x="14.500" y="6.500" width="4" height="4" fill="#3fcf7a"/><rect x="8.500" y="12.500" width="4" height="3.500" fill="#f0703c"/><rect x="14.500" y="12.500" width="4" height="3.500" fill="#f4b060"/><path d="M3 4L4.200 1.800L5.400 4Z" fill="#e04a3a"/><path d="M6.500 4L7.700 1.800L8.900 4Z" fill="#e8a33a"/><path d="M10 4L11.200 1.800L12.400 4Z" fill="#4ab84a"/></svg>
<svg class="abs" style="left:62px;top:5px" width="22" height="21" viewBox="0 0 22 21"><defs><linearGradient id="og" x1="0" y1="0" x2="0" y2="1"><stop offset="0" stop-color="#a9c4de"/><stop offset="1" stop-color="#7396bd"/></linearGradient></defs><path d="M1.500 3C1.500 2 2 1.500 3 1.500H8L10 3.500H19C20 3.500 20.500 4 20.500 5V15C20.500 16 20 16.500 19 16.500H3C2 16.500 1.500 16 1.500 15Z" fill="#6f93ba" stroke="#5b7fa5"/><path d="M1.500 5.500H20.500V15C20.500 16 20 16.500 19 16.500H3C2 16.500 1.500 16 1.500 15Z" fill="url(#og)"/><path d="M8.500 6.500C13 6.500 15.500 9.500 15.600 13H18.600L13.800 19.500L9 13H12C12 10.500 11 8.500 8.500 6.500Z" fill="#fff" stroke="#8a8a8a" stroke-width=".8"/></svg>
<svg class="abs" style="left:92px;top:5px" width="20" height="20" viewBox="0 0 20 20"><path d="M1.5 1H18.5C19 1 19.5 1.5 19.5 2V18C19.5 18.5 19 19 18.5 19H3.5L1 16.5V2C1 1.5 1 1 1.5 1Z" fill="#1c1c1c"/><rect x="4" y="1" width="12" height="9" fill="#f4f4f4"/><rect x="4" y="1" width="12" height="2" fill="#3d6fc4"/><path d="M5.5 5h9M5.5 7h9" stroke="#a0a0a0" stroke-width=".9"/><rect x="5" y="13" width="10" height="6" fill="#d9d9d9"/><rect x="6.5" y="14" width="3" height="5" fill="#1c1c1c"/></svg>
<svg class="abs" style="left:120px;top:4px" width="22" height="22" viewBox="0 0 22 22"><rect x="5.5" y="1.5" width="11" height="8" fill="#fdfdfd" stroke="#a5a5a5"/><rect x="1" y="8.5" width="20" height="9" rx="2" fill="#d4d4d4" stroke="#8b8b8b"/><rect x="3" y="9.5" width="16" height="3" rx="1" fill="#2a2a2a"/><rect x="5" y="15" width="12" height="5.5" fill="#f4f4f4" stroke="#8b8b8b" stroke-width=".8"/><rect x="6" y="16" width="10" height="3.5" fill="#2f7fd0"/><rect x="9" y="16.5" width="4" height="2.5" fill="#35b8a0"/></svg>
<svg class="abs" style="left:156px;top:5px" width="20" height="21" viewBox="0 0 20 21"><path d="M3 1L12 13.500L10.500 14.500L2 3Z" fill="#d4d4d4" stroke="#b0b0b0" stroke-width=".6"/><path d="M17 1L8 13.500L9.500 14.500L18 3Z" fill="#dcdcdc" stroke="#b0b0b0" stroke-width=".6"/><ellipse cx="5.500" cy="16" rx="3.400" ry="2.600" fill="none" stroke="#d8a090" stroke-width="1.900" transform="rotate(-30 5.500 16)"/><ellipse cx="14.500" cy="16" rx="3.400" ry="2.600" fill="none" stroke="#d8a090" stroke-width="1.900" transform="rotate(30 14.500 16)"/></svg>
<svg class="abs" style="left:185px;top:5px" width="20" height="21" viewBox="0 0 20 21"><path d="M2.500 1.500H9L12.500 5V12.500H2.500Z" fill="#f1f1f1" stroke="#c0c0c0"/><path d="M4.500 5h5M4.500 7h6M4.500 9h6" stroke="#bcbcbc" stroke-width=".8"/><path d="M8.500 8.500H15L18.500 12V19.500H8.500Z" fill="#f4f4f4" stroke="#c0c0c0"/><path d="M10.500 12h4M10.500 14h6M10.500 16h6M10.500 18h6" stroke="#bcbcbc" stroke-width=".8"/></svg>
<svg class="abs" style="left:213px;top:5px" width="20" height="22" viewBox="0 0 20 22"><rect x="1.500" y="3.500" width="14" height="16" rx="1.500" fill="#dccaa6" stroke="#c7b48c"/><path d="M5 4.500C5 2.500 6.500 1.500 8.500 1.500C10.500 1.500 12 2.500 12 4.500Z" fill="#e0e0e0" stroke="#bdbdbd" stroke-width=".8"/><path d="M8.500 8.500H14.500L18 12V20.500H8.500Z" fill="#f4f4f4" stroke="#c2c2c2"/><path d="M10.500 13h5M10.500 15h6M10.500 17h6M10.500 19h6" stroke="#bcbcbc" stroke-width=".8"/></svg>
<svg class="abs" style="left:242px;top:4px" width="22" height="23" viewBox="0 0 22 23"><defs><linearGradient id="bg1" x1="0" y1="0" x2="1" y2="1"><stop offset="0" stop-color="#ffffff"/><stop offset="1" stop-color="#b9b9b9"/></linearGradient></defs><path d="M17.500 1.500C19 1.500 20.500 3 20 4.500L15.500 9.500L12.500 7Z" fill="url(#bg1)" stroke="#8a8a8a" stroke-width=".7"/><path d="M12 6.500L16 10L14.500 11.500L10.500 8Z" fill="#e9e9e9" stroke="#777" stroke-width=".6"/><path d="M10 8L14.800 12L11.500 17L5 12Z" fill="#a8682c"/><path d="M8.500 10L12.500 13.500M7 11.500L11 15" stroke="#7a4416" stroke-width=".8"/><path d="M5 11.500L11.800 16.800C11 19 9 20.500 6.500 20.500C4 19.500 2 17.500 1 15.500C3 14.800 4.500 13.500 5 11.500Z" fill="#3556c8" stroke="#2a44a0" stroke-width=".5"/><ellipse cx="7.500" cy="21.200" rx="5" ry=".9" fill="#8a9ad8" opacity=".6"/></svg>
<svg class="abs" style="left:260px;top:0" width="150" height="32" viewBox="0 0 1362 291"><defs><linearGradient id="ug" x1="0" y1="0" x2="0" y2="1"><stop offset="0" stop-color="#fbd36a"/><stop offset="1" stop-color="#e3961a"/></linearGradient><linearGradient id="rg" x1="0" y1="0" x2="0" y2="1"><stop offset="0" stop-color="#e3edf6"/><stop offset="1" stop-color="#c3d7e8"/></linearGradient></defs><path d="M165 85L165 188L270 188L238 156C252 136 276 131 295 141C310 151 305 171 281 178L296 202C338 190 357 155 341 115C320 68 250 60 202 122Z" fill="url(#ug)" stroke="#b8790f" stroke-width="7" stroke-linejoin="round"/><path d="M690 85L690 188L585 188L617 156C603 136 579 131 560 141C545 151 550 171 574 178L559 202C517 190 498 155 514 115C535 68 605 60 653 122Z" fill="url(#rg)" stroke="#a3bdd6" stroke-width="7" stroke-linejoin="round"/></svg>
<svg class="abs" style="left:302.5px;top:14px" width="6" height="4"><path d="M0 0H6L3.0 4Z" fill="#222"/></svg>

<svg class="abs" style="left:340.5px;top:14px" width="6" height="4"><path d="M0 0H6L3.0 4Z" fill="#aaa"/></svg>
<svg class="abs" style="left:363px;top:4px" width="18" height="21" viewBox="0 0 18 21"><defs><linearGradient id="sg" x1="0" y1="0" x2="0" y2="1"><stop offset="0" stop-color="#4a8af0"/><stop offset="1" stop-color="#1c46b8"/></linearGradient></defs><text x="1.6" y="17.6" font-family="'Liberation Serif',serif" font-weight="bold" font-size="22.5" fill="url(#sg)" stroke="#1a3fa0" stroke-width=".35">Σ</text></svg>
<svg class="abs" style="left:384.5px;top:14px" width="6" height="4"><path d="M0 0H6L3.0 4Z" fill="#222"/></svg>
<svg class="abs" style="left:396.5px;top:3.5px" width="24" height="23" viewBox="0 0 24 23"><text x="2" y="9.6" font-family="'Liberation Serif',serif" font-weight="bold" font-size="13" fill="#d9822a" stroke="#a85a14" stroke-width=".3">A</text><text x="2.6" y="19.6" font-family="'Liberation Serif',serif" font-weight="bold" font-style="italic" font-size="13" fill="#2f62d0" stroke="#1f469c" stroke-width=".3">Z</text><path d="M14.2 7.5H18.2V13.5H21.2L16.2 19.4L11.2 13.5H14.2Z" fill="#fdfdfd" stroke="#8a8a8a" stroke-width=".9"/></svg>
<svg class="abs" style="left:422.5px;top:14px" width="6" height="4"><path d="M0 0H6L3.0 4Z" fill="#222"/></svg>
<svg class="abs" style="left:435px;top:5px" width="24" height="21" viewBox="0 0 24 21"><defs><linearGradient id="fg" x1="0" y1="0" x2="1" y2="0"><stop offset="0" stop-color="#8a8a8a"/><stop offset=".45" stop-color="#e6e6e6"/><stop offset="1" stop-color="#6e6e6e"/></linearGradient></defs><path d="M1 2.5C1 .8 21 .8 21 2.5L12.8 10.5V18L9.4 17V10.5Z" fill="url(#fg)" stroke="#6a6a6a" stroke-width=".8"/><ellipse cx="11" cy="2.6" rx="9.4" ry="1.5" fill="#5e5e5e"/><ellipse cx="11" cy="2.3" rx="8" ry=".8" fill="#9a9a9a"/><path d="M15.2 13.2h6M15.2 16.2h6" stroke="#2f5fd0" stroke-width="1.9"/></svg>
<svg class="abs" style="left:460.5px;top:14px" width="6" height="4"><path d="M0 0H6L3.0 4Z" fill="#222"/></svg>
<svg class="abs" style="left:477px;top:2px" width="27" height="27" viewBox="0 0 27 27"><defs><linearGradient id="xg" x1="0" y1="0" x2="0" y2="1"><stop offset="0" stop-color="#c9e9b0"/><stop offset="1" stop-color="#9fd47c"/></linearGradient></defs><rect x=".5" y=".5" width="25" height="25" rx="4" fill="#b2b2b2" stroke="#828282"/><rect x="1.5" y="1.5" width="23" height="23" rx="3.2" fill="none" stroke="#9a9a9a"/><path d="M9.4 4.2H21.2Q22.8 4.2 22.8 5.800V20.200Q22.800 21.800 21.200 21.800H9.400C1 21.800 1 4.200 9.400 4.200Z" fill="url(#xg)" stroke="#4f8a34" stroke-width="1"/><text x="7.400" y="17.600" font-family="'Liberation Serif',serif" font-style="italic" font-size="14.500" fill="#23381a">fx</text></svg>
<svg class="abs" style="left:510px;top:5px" width="19" height="20" viewBox="0 0 19 20"><rect x="1.500" y="1.500" width="16" height="17" fill="#fcfcfc" stroke="#7c7c7c"/><rect x="2" y="2" width="15" height="2" fill="#d9d9d9"/><path d="M1.500 8.500H17.500" stroke="#9a9a9a" stroke-width=".8"/><rect x="3" y="4.500" width="3.500" height="3" fill="#3f8fe0"/><rect x="7.800" y="4.500" width="3.500" height="3" fill="#e6e6e6" stroke="#999" stroke-width=".5"/><rect x="12.500" y="4.500" width="3.500" height="3" fill="#e6e6e6" stroke="#999" stroke-width=".5"/><path d="M3.500 1.500l2 2.500M5.500 1.500l-2 2.500" stroke="#e0523a" stroke-width="1"/><path d="M2 11.500h15M2 14.500h15" stroke="#c4c4c4" stroke-width=".9"/></svg>
<svg class="abs" style="left:537px;top:5px" width="23" height="21" viewBox="0 0 23 21"><rect x="6.5" y="1" width="12" height="8" fill="#1e1e1e"/><rect x="8.500" y="2" width="8" height="6.500" fill="#4fa8e8"/><path d="M7.500 1.500v7M17.500 1.500v7" stroke="#eee" stroke-width="1" stroke-dasharray="1.200 1.200"/><rect x="1.500" y="6.500" width="10" height="9" fill="#4a7fd0" stroke="#1f4a98"/><rect x="3" y="8" width="7" height="6" fill="#7eaaea"/><path d="M13.500 18V8.500L19.500 7V16.500" fill="none" stroke="#2d55b0" stroke-width="1.600"/><path d="M13.500 8.500L19.500 7V9.500L13.500 11Z" fill="#2d55b0"/><ellipse cx="11.800" cy="18" rx="2.300" ry="1.800" fill="#2d55b0"/><ellipse cx="17.800" cy="16.800" rx="2.300" ry="1.800" fill="#2d55b0"/></svg>
<div class="abs" style="left:568px;top:6px;width:50px;height:19px;background:#fff;border:1px solid #a0a0a0;border-radius:1px;box-shadow:inset 0 1px 1px rgba(0,0,0,.15)"></div>
<div class="abs" style="left:603px;top:7px;width:14px;height:17px;background:linear-gradient(#cdcdcd,#a9a9a9 50%,#909090);border-left:1px solid #9a9a9a"></div>
<svg class="abs" style="left:607.75px;top:13.5px" width="5.5" height="3.5"><path d="M0 0H5.5L2.75 3.5Z" fill="#4a4a4a"/></svg>
<div class="u" style="left:571px;top:8.5px;font-size:12px;line-height:14px;color:#111;font-family:'Liberation Sans',sans-serif;letter-spacing:-.1px">100%</div>
<svg class="abs" style="left:631px;top:4px" width="23" height="23" viewBox="0 0 23 23"><defs><radialGradient id="hg" cx=".5" cy=".25" r=".85"><stop offset="0" stop-color="#b98ee6"/><stop offset=".6" stop-color="#7d3fc4"/><stop offset="1" stop-color="#5a1f9c"/></radialGradient></defs><circle cx="11.5" cy="11.5" r="10.4" fill="#fafafa" stroke="#b5b5b5" stroke-width=".8"/><circle cx="11.5" cy="11.3" r="8.6" fill="url(#hg)"/><text x="7.500" y="16.200" font-family="'Liberation Sans',sans-serif" font-weight="bold" font-size="14" fill="#fff">?</text></svg>
<div class="abs" style="left:1092px;top:5px;width:264px;height:21px;border-radius:11px;border:1px solid #7d7d7d;background:linear-gradient(#dadada,#efefef);box-shadow:0 1px 0 #eee"></div>
<div class="abs" style="left:1124px;top:6px;width:231px;height:19px;border-radius:10px;border:1px solid #9a9a9a;border-right-color:transparent;border-bottom-color:#b5b5b5;background:#f8f8f8;box-shadow:inset 0 1px 2px rgba(0,0,0,.25)"></div>
<svg class="abs" style="left:1097px;top:8px" width="26" height="16"><circle cx="6.5" cy="6.5" r="4" fill="none" stroke="#2a2a2a" stroke-width="2"/><path d="M9.5 9.5L13.5 13.5" stroke="#2a2a2a" stroke-width="2.4" stroke-linecap="round"/><path d="M15 6h6.5l-3.25 3.6z" fill="#2a2a2a"/></svg>
<div class="u" style="left:1132px;top:8.5px;font-size:13px;line-height:15px;color:#b4b4b4;font-family:'Liberation Sans',sans-serif">Auf dem Blatt suchen</div>
<div class="abs" style="left:0px;top:32px;width:1362px;height:20px;background:linear-gradient(#ccddcc,#bdd2be 50%,#aac6ad)"></div>
<div class="abs" style="left:0px;top:52px;width:1362px;height:76px;background:#d3e9d6"></div>
<div class="abs" style="left:11px;top:32px;width:76px;height:20px;background:linear-gradient(#e8f0e8,#dae9db 50%,#d1e4d3);border-left:1px solid #a9c6a9;border-right:1px solid #9dbd9d"></div>
<div class="abs" style="left:155px;top:32px;width:2px;height:20px;background:linear-gradient(90deg,#a3c2a3 0 1px,#d9e9d9 1px 2px)"></div>
<div class="abs" style="left:233px;top:32px;width:2px;height:20px;background:linear-gradient(90deg,#a3c2a3 0 1px,#d9e9d9 1px 2px)"></div>
<div class="abs" style="left:329px;top:32px;width:2px;height:20px;background:linear-gradient(90deg,#a3c2a3 0 1px,#d9e9d9 1px 2px)"></div>
<div class="abs" style="left:411px;top:32px;width:2px;height:20px;background:linear-gradient(90deg,#a3c2a3 0 1px,#d9e9d9 1px 2px)"></div>
<div class="abs" style="left:488px;top:32px;width:2px;height:20px;background:linear-gradient(90deg,#a3c2a3 0 1px,#d9e9d9 1px 2px)"></div>
<div class="abs" style="left:553px;top:32px;width:2px;height:20px;background:linear-gradient(90deg,#a3c2a3 0 1px,#d9e9d9 1px 2px)"></div>
<div class="abs" style="left:649px;top:32px;width:2px;height:20px;background:linear-gradient(90deg,#a3c2a3 0 1px,#d9e9d9 1px 2px)"></div>
<svg class="abs" style="left:25.5px;top:36px" width="11" height="10.500" viewBox="0 0 11 11" preserveAspectRatio="none"><path d="M5.5 0.6L0.3 5.6H1.8V10.2H4.3V7H6.7V10.2H9.2V5.6H10.7Z" fill="#262626"/></svg>
<div class="u" style="left:46px;top:35px;font-size:12px;line-height:14px;font-weight:bold;letter-spacing:-.2px;color:#2b2b2b;font-family:'Liberation Sans',sans-serif;text-shadow:0 1px 0 rgba(255,255,255,.6)">Start</div>
<div class="u" style="left:102px;top:35px;font-size:12px;line-height:14px;font-weight:bold;letter-spacing:-.2px;color:#2b2b2b;font-family:'Liberation Sans',sans-serif;text-shadow:0 1px 0 rgba(255,255,255,.6)">Layout</div>
<div class="u" style="left:171px;top:35px;font-size:12px;line-height:14px;font-weight:bold;letter-spacing:-.2px;color:#2b2b2b;font-family:'Liberation Sans',sans-serif;text-shadow:0 1px 0 rgba(255,255,255,.6)">Tabellen</div>
<div class="u" style="left:249px;top:35px;font-size:12px;line-height:14px;font-weight:bold;letter-spacing:-.2px;color:#2b2b2b;font-family:'Liberation Sans',sans-serif;text-shadow:0 1px 0 rgba(255,255,255,.6)">Diagramme</div>
<div class="u" style="left:345px;top:35px;font-size:12px;line-height:14px;font-weight:bold;letter-spacing:-.2px;color:#2b2b2b;font-family:'Liberation Sans',sans-serif;text-shadow:0 1px 0 rgba(255,255,255,.6)">SmartArt</div>
<div class="u" style="left:427.5px;top:35px;font-size:12px;line-height:14px;font-weight:bold;letter-spacing:-.2px;color:#2b2b2b;font-family:'Liberation Sans',sans-serif;text-shadow:0 1px 0 rgba(255,255,255,.6)">Formeln</div>
<div class="u" style="left:504.5px;top:35px;font-size:12px;line-height:14px;font-weight:bold;letter-spacing:-.2px;color:#2b2b2b;font-family:'Liberation Sans',sans-serif;text-shadow:0 1px 0 rgba(255,255,255,.6)">Daten</div>
<div class="u" style="left:569.5px;top:35px;font-size:12px;line-height:14px;font-weight:bold;letter-spacing:-.2px;color:#2b2b2b;font-family:'Liberation Sans',sans-serif;text-shadow:0 1px 0 rgba(255,255,255,.6)">Überprüfen</div>
<div class="abs" style="left:1305px;top:34px;width:1px;height:17px;background:#9fbd9f"></div>
<svg class="abs" style="left:1311px;top:36px" width="14" height="12"><path d="M2.5 8.5L7 4L11.5 8.5" fill="none" stroke="#333" stroke-width="1.8"/></svg>
<svg class="abs" style="left:1335.5px;top:35.5px" width="12" height="12" viewBox="0 0 12 12"><rect x="4.900" y="0" width="2.200" height="3" fill="#444" transform="rotate(0 6 6)"/><rect x="4.900" y="0" width="2.200" height="3" fill="#444" transform="rotate(45 6 6)"/><rect x="4.900" y="0" width="2.200" height="3" fill="#444" transform="rotate(90 6 6)"/><rect x="4.900" y="0" width="2.200" height="3" fill="#444" transform="rotate(135 6 6)"/><rect x="4.900" y="0" width="2.200" height="3" fill="#444" transform="rotate(180 6 6)"/><rect x="4.900" y="0" width="2.200" height="3" fill="#444" transform="rotate(225 6 6)"/><rect x="4.900" y="0" width="2.200" height="3" fill="#444" transform="rotate(270 6 6)"/><rect x="4.900" y="0" width="2.200" height="3" fill="#444" transform="rotate(315 6 6)"/><circle cx="6" cy="6" r="3.900" fill="#444"/><circle cx="6" cy="6" r="1.700" fill="#bdd4bd"/></svg>
<svg class="abs" style="left:1351.5px;top:40px" width="6" height="3.5"><path d="M0 0H6L3.0 3.5Z" fill="#444"/></svg>
<div class="abs" style="left:2px;top:54px;width:1358px;height:72px;background:linear-gradient(#ebebeb,#e6e6e6 25%,#e1e1e1 70%,#dcdcdc);border:1px solid #a4c1a7;border-radius:5px 5px 4px 4px;box-shadow:inset 0 1px 0 #f3f3f3"></div>
<div class="abs" style="left:163px;top:60px;width:1px;height:62px;background:repeating-linear-gradient(#9a9a9a 0 1px,transparent 1px 3px)"></div>
<div class="abs" style="left:402px;top:60px;width:1px;height:62px;background:repeating-linear-gradient(#9a9a9a 0 1px,transparent 1px 3px)"></div>
<div class="abs" style="left:695px;top:60px;width:1px;height:62px;background:repeating-linear-gradient(#9a9a9a 0 1px,transparent 1px 3px)"></div>
<div class="abs" style="left:862px;top:60px;width:1px;height:62px;background:repeating-linear-gradient(#9a9a9a 0 1px,transparent 1px 3px)"></div>
<div class="abs" style="left:1093px;top:60px;width:1px;height:62px;background:repeating-linear-gradient(#9a9a9a 0 1px,transparent 1px 3px)"></div>
<div class="abs" style="left:1251px;top:60px;width:1px;height:62px;background:repeating-linear-gradient(#9a9a9a 0 1px,transparent 1px 3px)"></div>
<div class="abs" style="left:1346px;top:60px;width:1px;height:62px;background:repeating-linear-gradient(#9a9a9a 0 1px,transparent 1px 3px)"></div>
<div class="u" style="left:32px;top:56px;font-size:9.7px;line-height:11.7px;width:100px;text-align:center;color:#1a1a1a;font-family:'Liberation Sans',sans-serif">Bearbeiten</div>
<div class="u" style="left:232px;top:56px;font-size:9.7px;line-height:11.7px;width:100px;text-align:center;color:#1a1a1a;font-family:'Liberation Sans',sans-serif">Schriftart</div>
<div class="u" style="left:498.5px;top:56px;font-size:9.7px;line-height:11.7px;width:100px;text-align:center;color:#1a1a1a;font-family:'Liberation Sans',sans-serif">Ausrichtung</div>
<div class="u" style="left:727px;top:56px;font-size:9.7px;line-height:11.7px;width:100px;text-align:center;color:#1a1a1a;font-family:'Liberation Sans',sans-serif">Zahl</div>
<div class="u" style="left:926.5px;top:56px;font-size:9.7px;line-height:11.7px;width:100px;text-align:center;color:#1a1a1a;font-family:'Liberation Sans',sans-serif">Format</div>
<div class="u" style="left:1121px;top:56px;font-size:9.7px;line-height:11.7px;width:100px;text-align:center;color:#1a1a1a;font-family:'Liberation Sans',sans-serif">Zellen</div>
<div class="u" style="left:1249.5px;top:56px;font-size:9.7px;line-height:11.7px;width:100px;text-align:center;color:#1a1a1a;font-family:'Liberation Sans',sans-serif">Designs</div>
<div class="abs" style="left:6px;top:67px;width:154px;height:2px;background:linear-gradient(#d9d9d9 0 1px,#f2f2f2 1px 2px);opacity:.6"></div>
<div class="abs" style="left:167px;top:67px;width:232px;height:2px;background:linear-gradient(#d9d9d9 0 1px,#f2f2f2 1px 2px);opacity:.6"></div>
<div class="abs" style="left:406px;top:67px;width:283px;height:2px;background:linear-gradient(#d9d9d9 0 1px,#f2f2f2 1px 2px);opacity:.6"></div>
<div class="abs" style="left:699px;top:67px;width:160px;height:2px;background:linear-gradient(#d9d9d9 0 1px,#f2f2f2 1px 2px);opacity:.6"></div>
<div class="abs" style="left:867px;top:67px;width:223px;height:2px;background:linear-gradient(#d9d9d9 0 1px,#f2f2f2 1px 2px);opacity:.6"></div>
<div class="abs" style="left:1097px;top:67px;width:151px;height:2px;background:linear-gradient(#d9d9d9 0 1px,#f2f2f2 1px 2px);opacity:.6"></div>
<div class="abs" style="left:1255px;top:67px;width:88px;height:2px;background:linear-gradient(#d9d9d9 0 1px,#f2f2f2 1px 2px);opacity:.6"></div>
<svg class="abs" style="left:11px;top:73px" width="30" height="33" viewBox="0 0 30 33"><g opacity=".6"><rect x="1.500" y="4.500" width="20" height="26" rx="2" fill="#dcc08a" stroke="#c0a468"/><path d="M6 6.500C6 5 8.500 5 9 3.500C9.500 1 13.500 1 14 3.500C14.500 5 17 5 17 6.500Z" fill="#e4e4e4" stroke="#a9a9a9"/><path d="M9.500 12.500H19.500L24.500 17.500V31.500H9.500Z" fill="#fafafa" stroke="#b5b5b5"/><path d="M19.500 12.500V17.500H24.500" fill="#ececec" stroke="#b5b5b5"/><path d="M12 20h10M12 22.500h10M12 25h10M12 27.500h10" stroke="#d0d0d0"/></g></svg>
<svg class="abs" style="left:44.5px;top:86.5px" width="6" height="3.5"><path d="M0 0H6L3.0 3.5Z" fill="#b5b5b5"/></svg>
<div class="u" style="left:9px;top:108px;font-size:11px;line-height:13px;font-family:'Liberation Sans',sans-serif;color:#111;color:#8d8d8d;letter-spacing:-.2px">Einfügen</div>
<svg class="abs" style="left:62px;top:72px" width="17" height="20" viewBox="0 0 17 20"><rect x=".5" y=".5" width="16" height="19" rx="1" fill="#eaf3fd" stroke="#5d86b8"/><rect x="1" y="1" width="15" height="4" fill="#fdfdfd"/><path d="M.5 5H16.5" stroke="#5d86b8" stroke-width=".8"/><path d="M6.5 7.5H10.5V11.500H13.5L8.5 17L3.500 11.500H6.500Z" fill="#2f86e0" stroke="#1c5fb0" stroke-width=".8"/></svg>
<div class="u" style="left:84px;top:76px;font-size:11px;line-height:13px;font-family:'Liberation Sans',sans-serif;color:#111;letter-spacing:-.15px">Ausfüllen</div>
<svg class="abs" style="left:145.5px;top:80px" width="6" height="4"><path d="M0 0H6L3.0 4Z" fill="#6a6a6a"/></svg>
<svg class="abs" style="left:61px;top:100px" width="19" height="19" viewBox="0 0 19 19"><defs><linearGradient id="eg" x1="0" y1="0" x2="0" y2="1"><stop offset="0" stop-color="#fbfbfe"/><stop offset=".6" stop-color="#dfe2ee"/><stop offset="1" stop-color="#a9aec4"/></linearGradient></defs><g transform="rotate(-35 9.500 9.500)"><rect x="0" y="4.500" width="19" height="10.500" rx="4.500" fill="url(#eg)" stroke="#8e93a8" stroke-width=".9"/></g></svg>
<div class="u" style="left:84px;top:104px;font-size:11px;line-height:13px;font-family:'Liberation Sans',sans-serif;color:#111;letter-spacing:-.1px">Löschen</div>
<svg class="abs" style="left:145.5px;top:108px" width="6" height="4"><path d="M0 0H6L3.0 4Z" fill="#6a6a6a"/></svg>
<div class="abs" style="left:169px;top:72px;width:115px;height:20px;background:#fbfbfb;border:1px solid #a3a3a3;box-shadow:inset 0 1px 1px rgba(0,0,0,.18)"></div>
<div class="abs" style="left:269px;top:73px;width:14px;height:18px;background:linear-gradient(#f8f8f8,#e2e2e2);border-left:1px solid #b5b5b5"></div>
<svg class="abs" style="left:273.5px;top:81px" width="6" height="4"><path d="M0 0H6L3.0 4Z" fill="#444"/></svg>
<div class="u" style="left:172px;top:74.5px;font-size:12px;line-height:14px;font-family:'Liberation Sans',sans-serif;color:#111;letter-spacing:-.15px">Helvetica</div>
<div class="abs" style="left:286px;top:72px;width:48px;height:20px;background:#fbfbfb;border:1px solid #a3a3a3;box-shadow:inset 0 1px 1px rgba(0,0,0,.18)"></div>
<div class="abs" style="left:319px;top:73px;width:14px;height:18px;background:linear-gradient(#f8f8f8,#e2e2e2);border-left:1px solid #b5b5b5"></div>
<svg class="abs" style="left:323.5px;top:81px" width="6" height="4"><path d="M0 0H6L3.0 4Z" fill="#444"/></svg>
<div class="u" style="left:289px;top:74.5px;font-size:12px;line-height:14px;font-family:'Liberation Sans',sans-serif;color:#111;letter-spacing:-.15px">10</div>
<div class="abs" style="left:339px;top:71px;width:56px;height:22px;background:linear-gradient(#f5f5f5,#e8e8e8 50%,#dbdbdb);border:1px solid #a0a0a0;border-top-color:#a8a8a8;border-bottom-color:#979797;border-radius:4px;box-shadow:0 1px 0 rgba(255,255,255,.7)"></div>
<div class="abs" style="left:366px;top:72px;width:1px;height:20px;background:#bdbdbd"></div>
<div class="u" style="left:343.5px;top:73px;font-size:17px;line-height:19px;font-family:'Liberation Serif',serif;color:#555">A</div>
<svg class="abs" style="left:355.0px;top:80px" width="7" height="4"><path d="M0 4H7L3.5 0Z" fill="#3f8fe0"/></svg>
<div class="u" style="left:371px;top:73px;font-size:17px;line-height:19px;font-family:'Liberation Serif',serif;color:#555">A</div>
<svg class="abs" style="left:384.0px;top:80.5px" width="7" height="4"><path d="M0 0H7L3.5 4Z" fill="#3f8fe0"/></svg>
<div class="abs" style="left:169px;top:98.5px;width:84px;height:21.5px;background:linear-gradient(#f5f5f5,#e8e8e8 50%,#dbdbdb);border:1px solid #a0a0a0;border-top-color:#a8a8a8;border-bottom-color:#979797;border-radius:4px;box-shadow:0 1px 0 rgba(255,255,255,.7)"></div>
<div class="abs" style="left:196px;top:99.5px;width:1px;height:19.5px;background:#bdbdbd"></div>
<div class="abs" style="left:224px;top:99.5px;width:1px;height:19.5px;background:#bdbdbd"></div>
<div class="u" style="left:178.5px;top:100px;font-size:17px;line-height:19px;font-family:'Liberation Serif',serif;color:#555;font-weight:bold">F</div>
<div class="u" style="left:205px;top:100px;font-size:17px;line-height:19px;font-family:'Liberation Serif',serif;color:#555;font-style:italic">K</div>
<div class="u" style="left:234.5px;top:100px;font-size:15px;line-height:17px;font-family:'Liberation Serif',serif;color:#555;text-decoration:underline">U</div>
<div class="abs" style="left:264px;top:98.5px;width:37px;height:21.5px;background:linear-gradient(#f5f5f5,#e8e8e8 50%,#dbdbdb);border:1px solid #a0a0a0;border-top-color:#a8a8a8;border-bottom-color:#979797;border-radius:4px;box-shadow:0 1px 0 rgba(255,255,255,.7)"></div>
<svg class="abs" style="left:271px;top:103px" width="16" height="14"><path d="M1 1.5H13.5V12.5H1" fill="none" stroke="#2a2a2a" stroke-width="1.3"/></svg>
<svg class="abs" style="left:288.0px;top:107px" width="6" height="4"><path d="M0 0H6L3.0 4Z" fill="#666"/></svg>
<div class="abs" style="left:311px;top:98.5px;width:84px;height:21.5px;background:linear-gradient(#f5f5f5,#e8e8e8 50%,#dbdbdb);border:1px solid #a0a0a0;border-top-color:#a8a8a8;border-bottom-color:#979797;border-radius:4px;box-shadow:0 1px 0 rgba(255,255,255,.7)"></div>
<div class="abs" style="left:342px;top:99.5px;width:1px;height:19.5px;background:#bdbdbd"></div>
<div class="abs" style="left:352px;top:99.5px;width:1px;height:19.5px;background:#bdbdbd"></div>
<div class="abs" style="left:384px;top:99.5px;width:1px;height:19.5px;background:#bdbdbd"></div>
<svg class="abs" style="left:314px;top:99px" width="26" height="21" viewBox="0 0 26 21"><defs><linearGradient id="kg" x1="0" y1="0" x2="1" y2="0"><stop offset="0" stop-color="#fdfdfd"/><stop offset="1" stop-color="#9a9a9a"/></linearGradient></defs><path d="M11.500 1.500C10 3 10 6 12 8.500" fill="none" stroke="#555" stroke-width="1.200"/><path d="M9.500 5L17.500 9.500L12 15.500C10.500 16 6 13.500 5.500 11.500Z" fill="url(#kg)" stroke="#5a5a5a" stroke-width=".9"/><path d="M9.500 5.500C12 5 16.500 7.500 17.200 9.600C15 10 11 8 9.500 5.500Z" fill="#2f6fd0" stroke="#1f4f9c" stroke-width=".6"/><path d="M17 9.500C19 10.500 19.500 13 18.500 15C17.200 13.500 16.800 11.500 17 9.500Z" fill="#2f6fd0"/><rect x="2" y="15" width="20.500" height="4.500" fill="#f4e840"/></svg>
<svg class="abs" style="left:343.5px;top:107.5px" width="6" height="4"><path d="M0 0H6L3.0 4Z" fill="#666"/></svg>
<div class="u" style="left:361.5px;top:98px;font-size:17px;line-height:19px;font-family:'Liberation Serif',serif;color:#555">A</div>
<div class="abs" style="left:359px;top:114px;width:18.5px;height:4px;background:#e8392a"></div>
<svg class="abs" style="left:386.5px;top:107.5px" width="6" height="4"><path d="M0 0H6L3.0 4Z" fill="#666"/></svg>
<div class="abs" style="left:408px;top:71px;width:84px;height:22px;background:linear-gradient(#f5f5f5,#e8e8e8 50%,#dbdbdb);border:1px solid #a0a0a0;border-top-color:#a8a8a8;border-bottom-color:#979797;border-radius:4px;box-shadow:0 1px 0 rgba(255,255,255,.7)"></div>
<div class="abs" style="left:463px;top:71px;width:29px;height:22px;background:linear-gradient(#989898,#a9a9a9 40%,#b6b6b6);border:1px solid #858585;border-radius:0 4px 4px 0"></div>
<div class="abs" style="left:435px;top:72px;width:1px;height:20px;background:#bdbdbd"></div>
<div class="abs" style="left:463px;top:72px;width:1px;height:20px;background:#bdbdbd"></div>
<div class="abs" style="left:414px;top:75.3px;width:16px;height:1.3px;background:#858585"></div>
<div class="abs" style="left:414px;top:78.2px;width:16px;height:1.3px;background:#858585"></div>
<div class="abs" style="left:414px;top:81.1px;width:16px;height:1.3px;background:#858585"></div>
<div class="abs" style="left:442px;top:78.3px;width:16px;height:1.3px;background:#858585"></div>
<div class="abs" style="left:442px;top:81.2px;width:16px;height:1.3px;background:#858585"></div>
<div class="abs" style="left:442px;top:84.1px;width:16px;height:1.3px;background:#858585"></div>
<div class="abs" style="left:470px;top:81.0px;width:16px;height:1.3px;background:#6e6e6e"></div>
<div class="abs" style="left:470px;top:83.9px;width:16px;height:1.3px;background:#6e6e6e"></div>
<div class="abs" style="left:470px;top:86.8px;width:16px;height:1.3px;background:#6e6e6e"></div>
<div class="abs" style="left:497px;top:71px;width:38px;height:22px;background:linear-gradient(#f5f5f5,#e8e8e8 50%,#dbdbdb);border:1px solid #a0a0a0;border-top-color:#a8a8a8;border-bottom-color:#979797;border-radius:4px;box-shadow:0 1px 0 rgba(255,255,255,.7)"></div>
<div class="u" style="left:501px;top:73.5px;font-size:13.5px;line-height:15.5px;font-family:'Liberation Serif',serif;color:#555">abc</div>
<svg class="abs" style="left:522.75px;top:80px" width="5.5" height="4"><path d="M0 0H5.5L2.75 4Z" fill="#666"/></svg>
<svg class="abs" style="left:541px;top:72px" width="23" height="21" viewBox="0 0 23 21"><rect x="1.500" y="1.500" width="11.500" height="4.500" fill="#f2f7fd" stroke="#6a8fc0" stroke-width=".9"/><rect x="1.500" y="10" width="11.500" height="8.500" fill="#eaf2fc" stroke="#6a8fc0" stroke-width=".9"/><path d="M3.500 3.800h3M7.500 3.800h3" stroke="#555" stroke-width="1"/><path d="M11 3.500h3" stroke="#d8382a" stroke-width="1.100"/><path d="M3.500 12.500h7M3.500 14.500h5M3.500 16.500h7" stroke="#5a6a8a" stroke-width=".9"/><path d="M15.500 4.500C20.500 6 21 12.500 17 15.500" fill="none" stroke="#2d4f9a" stroke-width="1.900"/><path d="M14 14.500L18.500 12.800L18.300 17.800Z" fill="#2d4f9a"/></svg>
<div class="u" style="left:566px;top:76px;font-size:11px;line-height:13px;font-family:'Liberation Sans',sans-serif;color:#111;">Zeilenumbruch</div>
<svg class="abs" style="left:674.5px;top:80px" width="6" height="4"><path d="M0 0H6L3.0 4Z" fill="#666"/></svg>
<div class="abs" style="left:408px;top:98.5px;width:84px;height:21.5px;background:linear-gradient(#f5f5f5,#e8e8e8 50%,#dbdbdb);border:1px solid #a0a0a0;border-top-color:#a8a8a8;border-bottom-color:#979797;border-radius:4px;box-shadow:0 1px 0 rgba(255,255,255,.7)"></div>
<div class="abs" style="left:435px;top:99.5px;width:1px;height:19.5px;background:#bdbdbd"></div>
<div class="abs" style="left:463px;top:99.5px;width:1px;height:19.5px;background:#bdbdbd"></div>
<div class="abs" style="left:414px;top:102px;width:16px;height:1.3px;background:#808080"></div>
<div class="abs" style="left:414px;top:105px;width:11px;height:1.3px;background:#808080"></div>
<div class="abs" style="left:414px;top:108px;width:16px;height:1.3px;background:#808080"></div>
<div class="abs" style="left:414px;top:111px;width:8px;height:1.3px;background:#808080"></div>
<div class="abs" style="left:414px;top:114px;width:14px;height:1.3px;background:#808080"></div>
<div class="abs" style="left:442.0px;top:102px;width:16px;height:1.3px;background:#808080"></div>
<div class="abs" style="left:444.5px;top:105px;width:11px;height:1.3px;background:#808080"></div>
<div class="abs" style="left:442.0px;top:108px;width:16px;height:1.3px;background:#808080"></div>
<div class="abs" style="left:446.0px;top:111px;width:8px;height:1.3px;background:#808080"></div>
<div class="abs" style="left:443.0px;top:114px;width:14px;height:1.3px;background:#808080"></div>
<div class="abs" style="left:470px;top:102px;width:16px;height:1.3px;background:#808080"></div>
<div class="abs" style="left:475px;top:105px;width:11px;height:1.3px;background:#808080"></div>
<div class="abs" style="left:470px;top:108px;width:16px;height:1.3px;background:#808080"></div>
<div class="abs" style="left:478px;top:111px;width:8px;height:1.3px;background:#808080"></div>
<div class="abs" style="left:472px;top:114px;width:14px;height:1.3px;background:#808080"></div>
<div class="abs" style="left:497px;top:98.5px;width:56px;height:21.5px;background:linear-gradient(#f5f5f5,#e8e8e8 50%,#dbdbdb);border:1px solid #a0a0a0;border-top-color:#a8a8a8;border-bottom-color:#979797;border-radius:4px;box-shadow:0 1px 0 rgba(255,255,255,.7)"></div>
<div class="abs" style="left:525px;top:99.5px;width:1px;height:19.5px;background:#bdbdbd"></div>
<svg class="abs" style="left:500px;top:101px" width="22" height="16" viewBox="0 0 22 16"><path d="M5.500 1.5H21" stroke="#808080" stroke-width="1.300"/><path d="M5.500 4.5H21" stroke="#808080" stroke-width="1.300"/><path d="M5.500 7.5H21" stroke="#808080" stroke-width="1.300"/><path d="M5.500 10.5H21" stroke="#808080" stroke-width="1.300"/><path d="M5.500 13.5H21" stroke="#808080" stroke-width="1.300"/><rect x="0" y="3" width="9.500" height="9" fill="#e6e6e6"/><path d="M8.500 6H5V3.800L1.200 7.500L5 11.200V9H8.500Z" fill="#9fd4fa" stroke="#2f8fe0" stroke-width="1"/></svg>
<svg class="abs" style="left:528px;top:101px" width="22" height="16" viewBox="0 0 22 16"><path d="M5.500 1.5H21" stroke="#808080" stroke-width="1.300"/><path d="M5.500 4.5H21" stroke="#808080" stroke-width="1.300"/><path d="M5.500 7.5H21" stroke="#808080" stroke-width="1.300"/><path d="M5.500 10.5H21" stroke="#808080" stroke-width="1.300"/><path d="M5.500 13.5H21" stroke="#808080" stroke-width="1.300"/><rect x="0" y="3" width="9.500" height="9" fill="#e6e6e6"/><path d="M1.200 6H4.700V3.800L8.500 7.500L4.700 11.200V9H1.200Z" fill="#9fd4fa" stroke="#2f8fe0" stroke-width="1"/></svg>
<svg class="abs" style="left:560px;top:101px" width="20" height="18" viewBox="0 0 20 18"><g opacity=".65"><rect x="1" y=".5" width="18" height="16.500" fill="#f3f7fb" stroke="#a8bcd4"/><path d="M1 4.500H19M5.500 .5V17" stroke="#a8bcd4"/><rect x="6" y="5" width="12.500" height="11.500" fill="#d6e5f4"/></g></svg>
<div class="u" style="left:583px;top:104px;font-size:11px;line-height:13px;font-family:'Liberation Sans',sans-serif;color:#111;color:#8d8d8d;letter-spacing:-.15px">Zusammenführen</div>
<svg class="abs" style="left:676.0px;top:108px" width="7" height="4"><path d="M0 0H7L3.5 4Z" fill="#b0b0b0"/></svg>
<div class="abs" style="left:701px;top:71px;width:155px;height:20px;background:#fbfbfb;border:1px solid #a3a3a3;box-shadow:inset 0 1px 1px rgba(0,0,0,.18)"></div>
<div class="abs" style="left:841px;top:72px;width:14px;height:18px;background:linear-gradient(#f8f8f8,#e2e2e2);border-left:1px solid #b5b5b5"></div>
<svg class="abs" style="left:845.5px;top:80px" width="6" height="4"><path d="M0 0H6L3.0 4Z" fill="#444"/></svg>
<div class="u" style="left:704px;top:73.5px;font-size:12px;line-height:14px;font-family:'Liberation Sans',sans-serif;color:#111;letter-spacing:-.15px">Zahl</div>
<div class="abs" style="left:701px;top:98.5px;width:94px;height:21.5px;background:linear-gradient(#f5f5f5,#e8e8e8 50%,#dbdbdb);border:1px solid #a0a0a0;border-top-color:#a8a8a8;border-bottom-color:#979797;border-radius:4px;box-shadow:0 1px 0 rgba(255,255,255,.7)"></div>
<div class="abs" style="left:728px;top:99.5px;width:1px;height:19.5px;background:#bdbdbd"></div>
<div class="abs" style="left:738px;top:99.5px;width:1px;height:19.5px;background:#bdbdbd"></div>
<div class="abs" style="left:766px;top:99.5px;width:1px;height:19.5px;background:#bdbdbd"></div>
<svg class="abs" style="left:705px;top:101px" width="22" height="18" viewBox="0 0 22 18"><rect x=".5" y=".5" width="17" height="10" rx="1" fill="#5fa8e8" stroke="#2f6fb8"/><ellipse cx="5" cy="5.500" rx="2" ry="2.200" fill="none" stroke="#d6ecfc" stroke-width=".9"/><ellipse cx="10" cy="5.500" rx="2" ry="2.200" fill="none" stroke="#d6ecfc" stroke-width=".9"/><ellipse cx="14.500" cy="5.500" rx="1.500" ry="2.200" fill="none" stroke="#d6ecfc" stroke-width=".9"/><g fill="#e8d070" stroke="#8f7a2a" stroke-width=".7"><ellipse cx="14.500" cy="12.500" rx="3.300" ry="1.600"/><ellipse cx="14.500" cy="10.800" rx="3.300" ry="1.600"/><ellipse cx="14.500" cy="9.100" rx="3.300" ry="1.600"/><ellipse cx="14.500" cy="7.400" rx="3.300" ry="1.600"/><ellipse cx="9.500" cy="14.500" rx="3.300" ry="1.600"/><ellipse cx="9.500" cy="12.800" rx="3.300" ry="1.600"/></g></svg>
<svg class="abs" style="left:731.0px;top:107.5px" width="6" height="4"><path d="M0 0H6L3.0 4Z" fill="#666"/></svg>
<div class="u" style="left:746px;top:99px;font-size:17px;line-height:19px;font-family:'Liberation Sans',sans-serif;color:#111;color:#333">%</div>
<div class="u" style="left:770.5px;top:100px;font-size:14.5px;line-height:16.5px;font-family:'Liberation Serif',serif;color:#555">000</div>
<div class="abs" style="left:800px;top:98.5px;width:56px;height:21.5px;background:linear-gradient(#f5f5f5,#e8e8e8 50%,#dbdbdb);border:1px solid #a0a0a0;border-top-color:#a8a8a8;border-bottom-color:#979797;border-radius:4px;box-shadow:0 1px 0 rgba(255,255,255,.7)"></div>
<div class="abs" style="left:828px;top:99.5px;width:1px;height:19.5px;background:#bdbdbd"></div>
<svg class="abs" style="left:805px;top:101px" width="22" height="18" viewBox="0 0 22 18"><path d="M8 3.500H5V1.500L1 5L5 8.500V6.500H8Z" fill="#9fd4fa" stroke="#2f8fe0" stroke-width=".9"/><text x="9.500" y="7.500" font-family="'Liberation Serif',serif" font-weight="bold" font-size="8.500" fill="#444">,0</text><text x="5.500" y="16" font-family="'Liberation Serif',serif" font-weight="bold" font-size="8.500" fill="#444">,00</text></svg>
<svg class="abs" style="left:833px;top:101px" width="22" height="18" viewBox="0 0 22 18"><text x="5.500" y="7.500" font-family="'Liberation Serif',serif" font-weight="bold" font-size="8.500" fill="#444">,00</text><path d="M1 10.500H4.500V8.500L8.500 12L4.500 15.500V13.500H1Z" fill="#9fd4fa" stroke="#2f8fe0" stroke-width=".9"/><text x="9.500" y="16" font-family="'Liberation Serif',serif" font-weight="bold" font-size="8.500" fill="#444">,0</text></svg>
<svg class="abs" style="left:880px;top:73px" width="34" height="30" viewBox="0 0 34 30"><rect x="1" y="1.0" width="6.200" height="5.400" fill="#e9f0fa" stroke="#9fb4d4" stroke-width=".6"/><rect x="8" y="1.0" width="6.200" height="5.400" fill="#e0483a" stroke="#9fb4d4" stroke-width=".6"/><rect x="15" y="1.0" width="6.200" height="5.400" fill="#e9f0fa" stroke="#9fb4d4" stroke-width=".6"/><rect x="22" y="1.0" width="6.200" height="5.400" fill="#e9f0fa" stroke="#9fb4d4" stroke-width=".6"/><rect x="1" y="7.2" width="6.200" height="5.400" fill="#e9f0fa" stroke="#9fb4d4" stroke-width=".6"/><rect x="8" y="7.2" width="6.200" height="5.400" fill="#3f6fd0" stroke="#9fb4d4" stroke-width=".6"/><rect x="15" y="7.2" width="6.200" height="5.400" fill="#3f6fd0" stroke="#9fb4d4" stroke-width=".6"/><rect x="22" y="7.2" width="6.200" height="5.400" fill="#e9f0fa" stroke="#9fb4d4" stroke-width=".6"/><rect x="1" y="13.4" width="6.200" height="5.400" fill="#e9f0fa" stroke="#9fb4d4" stroke-width=".6"/><rect x="8" y="13.4" width="6.200" height="5.400" fill="#e0483a" stroke="#9fb4d4" stroke-width=".6"/><rect x="15" y="13.4" width="6.200" height="5.400" fill="#e0483a" stroke="#9fb4d4" stroke-width=".6"/><rect x="22" y="13.4" width="6.200" height="5.400" fill="#e9f0fa" stroke="#9fb4d4" stroke-width=".6"/><rect x="1" y="19.6" width="6.200" height="5.400" fill="#e9f0fa" stroke="#9fb4d4" stroke-width=".6"/><rect x="8" y="19.6" width="6.200" height="5.400" fill="#3f6fd0" stroke="#9fb4d4" stroke-width=".6"/><rect x="15" y="19.6" width="6.200" height="5.400" fill="#e9f0fa" stroke="#9fb4d4" stroke-width=".6"/><rect x="22" y="19.6" width="6.200" height="5.400" fill="#e9f0fa" stroke="#9fb4d4" stroke-width=".6"/><rect x="16.500" y="15.500" width="15" height="12.500" rx="1" fill="#f9f9f9" stroke="#8a8a8a" stroke-width=".8"/><text x="18" y="21.500" font-family="'Liberation Sans',sans-serif" font-size="6.500" fill="#333">≤≠</text><text x="18" y="27" font-family="'Liberation Sans',sans-serif" font-size="6.500" fill="#333">≡&gt;</text></svg>
<svg class="abs" style="left:914.5px;top:85px" width="6" height="4"><path d="M0 0H6L3.0 4Z" fill="#666"/></svg>
<div class="u" style="left:850px;top:101px;font-size:11px;line-height:13px;width:100px;text-align:center;font-family:'Liberation Sans',sans-serif;color:#111;letter-spacing:-.15px">Bedingte</div>
<div class="u" style="left:851px;top:113px;font-size:11px;line-height:13px;width:100px;text-align:center;font-family:'Liberation Sans',sans-serif;color:#111;letter-spacing:-.15px">Formatierung</div>
<div class="abs" style="left:944px;top:70px;width:140px;height:54px;background:#f6f6f6;border:1px solid #c2c2c2;box-shadow:inset 0 1px 1px rgba(0,0,0,.08)"></div>
<div class="abs" style="left:973px;top:75px;width:80px;height:20px;background:#f8f8f8;border:1px solid #6cc06c;box-shadow:inset 0 0 0 1px #a5dba5"></div>
<div class="u" style="left:977px;top:77px;font-size:10.5px;line-height:12.5px;font-family:'DejaVu Sans',sans-serif;font-stretch:condensed;color:#111;letter-spacing:.05px">Standard</div>
<div class="abs" style="left:973px;top:100px;width:80px;height:20px;background:#c6efce"></div>
<div class="u" style="left:977px;top:102.5px;font-size:10.5px;line-height:12.5px;font-family:'DejaVu Sans',sans-serif;font-stretch:condensed;color:#1a7a22">Gut</div>
<svg class="abs" style="left:1062px;top:88px" width="18" height="18"><circle cx="9" cy="9" r="7.6" fill="#fbfbfb" stroke="#8a8a8a" stroke-width="1"/><path d="M7 5.2L12 9L7 12.8Z" fill="#333"/></svg>
<svg class="abs" style="left:1104px;top:74px" width="30" height="31" viewBox="0 0 30 31"><rect x="1.5" y="0.5" width="6.5" height="5.0" fill="#dbe6f8" stroke="#6a86c0" stroke-width=".8"/><rect x="9.0" y="0.5" width="6.5" height="5.0" fill="#dbe6f8" stroke="#6a86c0" stroke-width=".8"/><rect x="13.0" y="8.5" width="6.5" height="6.0" fill="#3f7fe0" stroke="#2a5fb8" stroke-width=".8"/><rect x="20.5" y="8.5" width="6.5" height="6.0" fill="#3f7fe0" stroke="#2a5fb8" stroke-width=".8"/><rect x="1.5" y="17.5" width="6.5" height="5.5" fill="#dbe6f8" stroke="#6a86c0" stroke-width=".8"/><rect x="9.0" y="17.5" width="6.5" height="5.5" fill="#dbe6f8" stroke="#6a86c0" stroke-width=".8"/><rect x="1.5" y="24.0" width="6.5" height="5.5" fill="#dbe6f8" stroke="#6a86c0" stroke-width=".8"/><rect x="9.0" y="24.0" width="6.5" height="5.5" fill="#dbe6f8" stroke="#6a86c0" stroke-width=".8"/><path d="M11.500 10H7.500V7.500L2.500 11.500L7.500 15.500V13H11.500Z" fill="#9fe050" stroke="#4f9a1c" stroke-width=".9"/></svg>
<svg class="abs" style="left:1136.5px;top:87px" width="6" height="4"><path d="M0 0H6L3.0 4Z" fill="#666"/></svg>
<div class="u" style="left:1071.5px;top:108px;font-size:11px;line-height:13px;width:100px;text-align:center;font-family:'Liberation Sans',sans-serif;color:#111;letter-spacing:-.15px">Einfügen</div>
<svg class="abs" style="left:1151px;top:74px" width="31" height="31" viewBox="0 0 31 31"><rect x="0.5" y="0.5" width="6.5" height="5.0" fill="#dbe6f8" stroke="#6a86c0" stroke-width=".8"/><rect x="8.0" y="0.5" width="6.5" height="5.0" fill="#dbe6f8" stroke="#6a86c0" stroke-width=".8"/><rect x="15.5" y="8.5" width="6.0" height="6.0" fill="#e6eefa" stroke="#7f98c8" stroke-width=".8"/><rect x="22.5" y="8.5" width="6.0" height="6.0" fill="#e6eefa" stroke="#7f98c8" stroke-width=".8"/><rect x="0.5" y="17.5" width="6.5" height="5.5" fill="#dbe6f8" stroke="#6a86c0" stroke-width=".8"/><rect x="8.0" y="17.5" width="6.5" height="5.5" fill="#dbe6f8" stroke="#6a86c0" stroke-width=".8"/><rect x="0.5" y="24.0" width="6.5" height="5.5" fill="#dbe6f8" stroke="#6a86c0" stroke-width=".8"/><rect x="8.0" y="24.0" width="6.5" height="5.5" fill="#dbe6f8" stroke="#6a86c0" stroke-width=".8"/><circle cx="11.500" cy="11.500" r="5.300" fill="#e8602a" stroke="#a8400c" stroke-width=".9"/><path d="M9.200 9.200L13.800 13.800M13.800 9.200L9.200 13.800" stroke="#fff" stroke-width="1.900"/></svg>
<svg class="abs" style="left:1186.5px;top:87px" width="6" height="4"><path d="M0 0H6L3.0 4Z" fill="#666"/></svg>
<div class="u" style="left:1121.5px;top:108px;font-size:11px;line-height:13px;width:100px;text-align:center;font-family:'Liberation Sans',sans-serif;color:#111;letter-spacing:-.1px">Löschen</div>
<svg class="abs" style="left:1201.5px;top:74px" width="32" height="31" viewBox="0 0 32 31"><path d="M1 2H30" stroke="#555" stroke-width=".8" stroke-dasharray="1 1.500"/><path d="M9 2H21" stroke="#3a4a7a" stroke-width="1.100"/><path d="M11 0L7.500 2L11 4ZM19 0L22.500 2L19 4Z" fill="#3a4a7a"/><path d="M1 .5V3.500M26 .5V3.500" stroke="#555" stroke-width=".8"/><rect x="1.500" y="5.500" width="28" height="20" fill="#eaf0fb" stroke="#7f98c8" stroke-width=".9"/><path d="M9.500 5.500V25.500M18.500 5.500V25.500M26 5.500V25.500M1.500 9.500H29.500M1.500 20.500H29.500" stroke="#9fb2dc" stroke-width=".9"/><rect x="10" y="10" width="8" height="10" fill="#a9c0ee"/><path d="M3 25.500V27.500H9V25.500M10.500 25.500V27.500H17.500V25.500" fill="#f7f9fd" stroke="#7f98c8" stroke-width=".8"/></svg>
<svg class="abs" style="left:1234.5px;top:87px" width="6" height="4"><path d="M0 0H6L3.0 4Z" fill="#666"/></svg>
<div class="u" style="left:1171.5px;top:108px;font-size:11px;line-height:13px;width:100px;text-align:center;font-family:'Liberation Sans',sans-serif;color:#111;letter-spacing:-.1px">Format</div>
<svg class="abs" style="left:1259px;top:75px" width="32" height="28" viewBox="0 0 32 28"><path d="M1.500 1.500H22L29.500 9V25.500H1.500Z" fill="#fdfdfd" stroke="#8e8e8e"/><path d="M22 1.500V9H29.500Z" fill="#e4e4e4" stroke="#8e8e8e" stroke-linejoin="round"/><text x="3.500" y="15" font-family="'Liberation Serif',serif" font-size="14.500" fill="#3a62b8">Aa</text><path d="M21 12.500h6M21 15h6" stroke="#b5b5b5" stroke-width="1.200"/><rect x="4" y="19" width="3.500" height="3.500" fill="#3f7fe0"/><rect x="8.500" y="19" width="3.500" height="3.500" fill="#e0483a"/><rect x="13" y="19" width="3.500" height="3.500" fill="#8fc83f"/><rect x="17.500" y="19" width="3.500" height="3.500" fill="#a05fd0"/><rect x="22" y="19" width="3.500" height="3.500" fill="#f0a030"/></svg>
<svg class="abs" style="left:1292.5px;top:87px" width="6" height="4"><path d="M0 0H6L3.0 4Z" fill="#666"/></svg>
<div class="u" style="left:1230px;top:108px;font-size:11px;line-height:13px;width:100px;text-align:center;font-family:'Liberation Sans',sans-serif;color:#111;letter-spacing:-.1px">Designs</div>
<svg class="abs" style="left:1312px;top:73px" width="20" height="19" viewBox="0 0 20 19"><rect x=".5" y=".5" width="8" height="8" rx="1" fill="#7ea3dc" stroke="#5a7fc0" stroke-width=".8"/><rect x="10.500" y=".5" width="8" height="8" rx="1" fill="#de6a6a" stroke="#b84a4a" stroke-width=".8"/><rect x=".5" y="10.500" width="8" height="8" rx="1" fill="#a6d46a" stroke="#7fb040" stroke-width=".8"/><rect x="10.500" y="10.500" width="8" height="8" rx="1" fill="#c07ad8" stroke="#9a50b8" stroke-width=".8"/></svg>
<svg class="abs" style="left:1333.0px;top:80px" width="6" height="4"><path d="M0 0H6L3.0 4Z" fill="#666"/></svg>
<div class="u" style="left:1311px;top:99px;font-size:19px;line-height:21px;font-family:'Liberation Serif',serif;color:#3f62b8;letter-spacing:-.3px;-webkit-text-stroke:.4px #3f62b8">Aa</div>
<svg class="abs" style="left:1332.5px;top:108px" width="6" height="4"><path d="M0 0H6L3.0 4Z" fill="#666"/></svg>
<div class="abs" style="left:0px;top:128px;width:1362px;height:49px;background:#f6f6f6"></div>
<div class="abs" style="left:0px;top:128px;width:233px;height:16px;background:linear-gradient(#f4f4f4,#e9e9e9 50%,#dadada)"></div>
<div class="abs" style="left:0px;top:128px;width:116px;height:16px;background:#f8f8f8;border-right:1px solid #b5b5b5"></div>
<div class="abs" style="left:133px;top:128px;width:1px;height:16px;background:#b5b5b5"></div>
<div class="abs" style="left:0px;top:144px;width:233px;height:32px;background:linear-gradient(#a9afbb 0,#b7bdc9 2px,#b5bbc8 60%,#b2b8c5);border-right:1px solid #a5a9b0"></div>
<div class="u" style="left:49.5px;top:129.5px;font-size:11px;line-height:13px;font-family:'DejaVu Sans',sans-serif;color:#111;font-stretch:condensed">F14</div>
<svg class="abs" style="left:120.500px;top:131px" width="7" height="11"><path d="M3.500 0.500L6 4H1Z M3.500 10.500L6 7H1Z" fill="#222"/></svg>
<svg class="abs" style="left:143px;top:129px" width="90" height="16"><circle cx="7.5" cy="7.5" r="6" fill="#9a9a9a"/><path d="M5 5L10 10M10 5L5 10" stroke="#f4f4f4" stroke-width="1.8"/><circle cx="30.5" cy="7.5" r="6" fill="#9a9a9a"/><path d="M27.5 7.8L29.8 10L33.8 5.2" stroke="#f4f4f4" stroke-width="1.9" fill="none"/><path d="M90 .5H55.500C46.500 .5 46.500 15.500 55.500 15.500H90Z" fill="#f6f6f6" stroke="#adadad" stroke-width="1"/><circle cx="57" cy="7.500" r="3.700" fill="#cdcdcd"/><circle cx="57.600" cy="7" r="2.200" fill="#e2e2e2"/></svg>
<div class="u" style="left:215.5px;top:127.5px;font-size:13px;line-height:15px;font-family:'Liberation Serif',serif;font-style:italic;font-weight:bold;color:#2a2a2a;letter-spacing:-.3px">fx</div>
<div class="abs" style="left:0px;top:176px;width:1362px;height:1px;background:#b9b9b9"></div>
<div class="abs" style="left:0px;top:177px;width:1362px;height:2px;background:#f1f1f1"></div>
<div class="abs" style="left:1346px;top:128px;width:1px;height:560px;background:#a9a9a9"></div>
<div class="abs" style="left:1347px;top:128px;width:15px;height:580px;background:#f5f5f5"></div>
<div class="abs" style="left:1347px;top:145px;width:15px;height:1px;background:#bdbdbd"></div>
<svg class="abs" style="left:1349px;top:132px" width="10" height="7"><path d="M5 1L9 6H1Z" fill="#2b2b2b"/></svg>
<div class="abs" style="left:1351px;top:181px;width:8px;height:19px;background:#c1c1c1;border-radius:4px"></div>
<div class="abs" style="left:0px;top:688px;width:1362px;height:1px;background:#8f8f8f"></div>
<div class="abs" style="left:0px;top:689px;width:1362px;height:17px;background:#f5f5f5"></div>
<div class="abs" style="left:131px;top:689px;width:584px;height:15px;background:linear-gradient(#8e9fb5,#97a6bb)"></div>
<div class="abs" style="left:66px;top:689px;width:66px;height:15px;background:linear-gradient(#f6f6f6,#fdfdfd 45%,#e4e4e4 55%,#efefef);border-right:1px solid #b9b9b9;border-left:1px solid #c9c9c9"></div>
<svg class="abs" style="left:72px;top:691px" width="56" height="11"><g fill="#a9a9a9"><path d="M1.500 1h1.300v8H1.500zM9 1v8L3.500 5z"/><path d="M22.500 1v8L17 5z"/><path d="M32 1v8L37.500 5z"/><path d="M45 1v8L50.500 5zM51 1H52.300v8H51z"/></g></svg>
<svg class="abs" style="left:0;top:688px" width="720" height="18"><defs><linearGradient id="tg" x1="0" y1="0" x2="0" y2="1"><stop offset="0" stop-color="#d9d9d9"/><stop offset=".5" stop-color="#e6e6e6"/><stop offset="1" stop-color="#efefef"/></linearGradient></defs>
<path d="M518 0.500V9C518 13 520 15.500 523 15.500H538C542 15.500 541 5 545 0.500Z" fill="url(#tg)" stroke="#707070" stroke-width="1"/>
<path d="M444 0.500V9C444 13 446 15.500 449 15.500H516C520 15.500 519 5 523 0.500Z" fill="url(#tg)" stroke="#707070" stroke-width="1"/>
<path d="M345 0.500V9C345 13 347 15.500 350 15.500H442C446 15.500 445 5 449 0.500Z" fill="url(#tg)" stroke="#707070" stroke-width="1"/>
<path d="M295 0.500V9C295 13 297 15.500 300 15.500H343C347 15.500 346 5 350 0.500Z" fill="url(#tg)" stroke="#707070" stroke-width="1"/>
<path d="M195 0.500V9C195 13 197 15.500 200 15.500H292C296 15.500 295 5 299 0.500Z" fill="url(#tg)" stroke="#707070" stroke-width="1"/>
<path d="M145.500 0.500V10C145.500 13 147 15.500 150 15.500H193C197 15.500 196 5 200 0.500Z" fill="#f9f9f9" stroke="#707070" stroke-width="1"/>
</svg>
<div class="abs" style="left:131px;top:688px;width:589px;height:1px;background:#7d7d7d"></div>
<div class="u" style="left:152.5px;top:689px;font-size:11px;line-height:13px;font-family:'DejaVu Sans',sans-serif;font-stretch:condensed;color:#111;font-weight:bold;letter-spacing:-.3px">Journal</div>
<div class="u" style="left:207px;top:689px;font-size:11px;line-height:13px;font-family:'DejaVu Sans',sans-serif;font-stretch:condensed;color:#111;">Erfolgsrechnung</div>
<div class="u" style="left:308px;top:689px;font-size:11px;line-height:13px;font-family:'DejaVu Sans',sans-serif;font-stretch:condensed;color:#111;">Bilanz</div>
<div class="u" style="left:358px;top:689px;font-size:11px;line-height:13px;font-family:'DejaVu Sans',sans-serif;font-stretch:condensed;color:#111;">Konfiguration</div>
<div class="u" style="left:455px;top:689px;font-size:11px;line-height:13px;font-family:'DejaVu Sans',sans-serif;font-stretch:condensed;color:#111;">Kontenplan</div>
<div class="u" style="left:525.5px;top:687px;font-size:14px;line-height:16px;font-family:'DejaVu Sans',sans-serif;font-stretch:condensed;color:#111;font-weight:bold;color:#333">+</div>
<svg class="abs" style="left:425px;top:689px" width="12" height="14"><path d="M3 6V4a3 3 0 0 1 6 0V6" fill="none" stroke="#b8b8b8" stroke-width="1.6"/><rect x="1" y="6" width="10" height="7" rx="1" fill="#f0a43a" stroke="#c07a1c" stroke-width=".8"/><path d="M2 8.5h8M2 10.5h8" stroke="#f8c978" stroke-width=".8"/></svg>
<div class="abs" style="left:714px;top:689px;width:5px;height:15px;background:linear-gradient(90deg,#8fa0b6 0 1px,#e4e4e4 1px 4px,#aaa 4px 5px)"></div>
<div class="abs" style="left:720px;top:692px;width:110px;height:9px;background:#c1c1c1;border-radius:5px"></div>
<div class="abs" style="left:0px;top:704px;width:1362px;height:19px;background:linear-gradient(#f6f6f6 0,#ececec 1px,#e4e4e4 50%,#dadada 15px,#ededed 16px);border-top:2px solid #a2a2a2"></div>
<div class="abs" style="left:0px;top:689px;width:66px;height:34px;background:linear-gradient(#f1f1f1,#e4e4e4)"></div>
<div class="abs" style="left:3px;top:693px;width:59px;height:24px;background:linear-gradient(#fdfdfd,#e0e0e0);border:1px solid #8d8d8d;border-radius:5px;box-shadow:0 1px 0 #fff"></div>
<div class="abs" style="left:3px;top:693px;width:30px;height:24px;background:linear-gradient(#595959,#747474);border:1px solid #484848;border-radius:5px 0 0 5px;box-shadow:inset 0 1px 3px rgba(0,0,0,.5)"></div>
<svg class="abs" style="left:11px;top:698.500px" width="16" height="13"><rect x=".5" y=".5" width="15" height="12" rx="1.500" fill="#bcd9fa" stroke="#3f86e0"/><rect x="1" y="1" width="14" height="2.500" fill="#5a9bea"/><path d="M1 3.500H15M1 6.500H15M1 9.500H15M4 3.500V12M7 3.500V12M10 3.500V12M13 3.500V12" stroke="#2d6fd0" stroke-width=".9"/></svg>
<svg class="abs" style="left:37px;top:699px" width="21" height="12"><g fill="#fafafa" stroke="#2a2a2a" stroke-width="1.100"><rect x=".6" y=".6" width="8" height="10.800" rx="1"/><rect x="11.400" y=".6" width="8" height="10.800" rx="1"/></g><g fill="#2a2a2a"><rect x="2.200" y="2.300" width="1.800" height="1.800"/><rect x="5.200" y="2.300" width="1.800" height="1.800"/><rect x="2.200" y="5.100" width="1.800" height="1.800"/><rect x="5.200" y="5.100" width="1.800" height="1.800"/><rect x="2.200" y="7.900" width="1.800" height="1.800"/><rect x="5.200" y="7.900" width="1.800" height="1.800"/><rect x="13" y="2.300" width="1.800" height="1.800"/><rect x="16" y="2.300" width="1.800" height="1.800"/><rect x="13" y="5.100" width="1.800" height="1.800"/><rect x="16" y="5.100" width="1.800" height="1.800"/><rect x="13" y="7.900" width="1.800" height="1.800"/><rect x="16" y="7.900" width="1.800" height="1.800"/></g></svg>
<div class="abs" style="left:66px;top:706px;width:2px;height:17px;background:linear-gradient(90deg,#b1b1b1 0 1px,#f6f6f6 1px 2px)"></div>
<div class="abs" style="left:168px;top:706px;width:2px;height:17px;background:linear-gradient(90deg,#b1b1b1 0 1px,#f6f6f6 1px 2px)"></div>
<div class="abs" style="left:567px;top:706px;width:2px;height:17px;background:linear-gradient(90deg,#b1b1b1 0 1px,#f6f6f6 1px 2px)"></div>
<div class="abs" style="left:725px;top:706px;width:2px;height:17px;background:linear-gradient(90deg,#b1b1b1 0 1px,#f6f6f6 1px 2px)"></div>
<div class="abs" style="left:864px;top:706px;width:2px;height:17px;background:linear-gradient(90deg,#b1b1b1 0 1px,#f6f6f6 1px 2px)"></div>
<div class="abs" style="left:899px;top:706px;width:2px;height:17px;background:linear-gradient(90deg,#b1b1b1 0 1px,#f6f6f6 1px 2px)"></div>
<div class="abs" style="left:938px;top:706px;width:2px;height:17px;background:linear-gradient(90deg,#b1b1b1 0 1px,#f6f6f6 1px 2px)"></div>
<div class="abs" style="left:974px;top:706px;width:2px;height:17px;background:linear-gradient(90deg,#b1b1b1 0 1px,#f6f6f6 1px 2px)"></div>
<div class="u" style="left:175px;top:708px;font-size:11px;line-height:13px;font-family:'DejaVu Sans',sans-serif;font-stretch:condensed;color:#111;">Bereit</div>
<div class="u" style="left:729px;top:708px;font-size:11px;line-height:13px;font-family:'DejaVu Sans',sans-serif;font-stretch:condensed;color:#111;letter-spacing:-.5px">Summe=</div>
<div class="u" style="left:774.5px;top:708px;font-size:11px;line-height:13px;font-family:'DejaVu Sans',sans-serif;font-stretch:condensed;color:#111;color:#d8321e;letter-spacing:.2px">-21'000.00</div>
<svg class="abs" style="left:849px;top:711px" width="10" height="7"><path d="M0.5 0.5H9.5L5 6Z" fill="#111"/></svg>
<div class="abs" style="left:1347px;top:688px;width:15px;height:35px;background:linear-gradient(#f5f5f5 0,#f3f3f3 18px,#ececec 22px,#e4e4e4)"></div>
<svg class="abs" style="left:1349px;top:710px" width="13" height="13"><path d="M12 1L1 12M12 5L5 12M12 9L9 12" stroke="#8a8a8a" stroke-width="1"/></svg>
<div class="abs" style="left:0px;top:0px;width:1px;height:723px;background:rgba(255,255,255,.45)"></div>
</body></html>
